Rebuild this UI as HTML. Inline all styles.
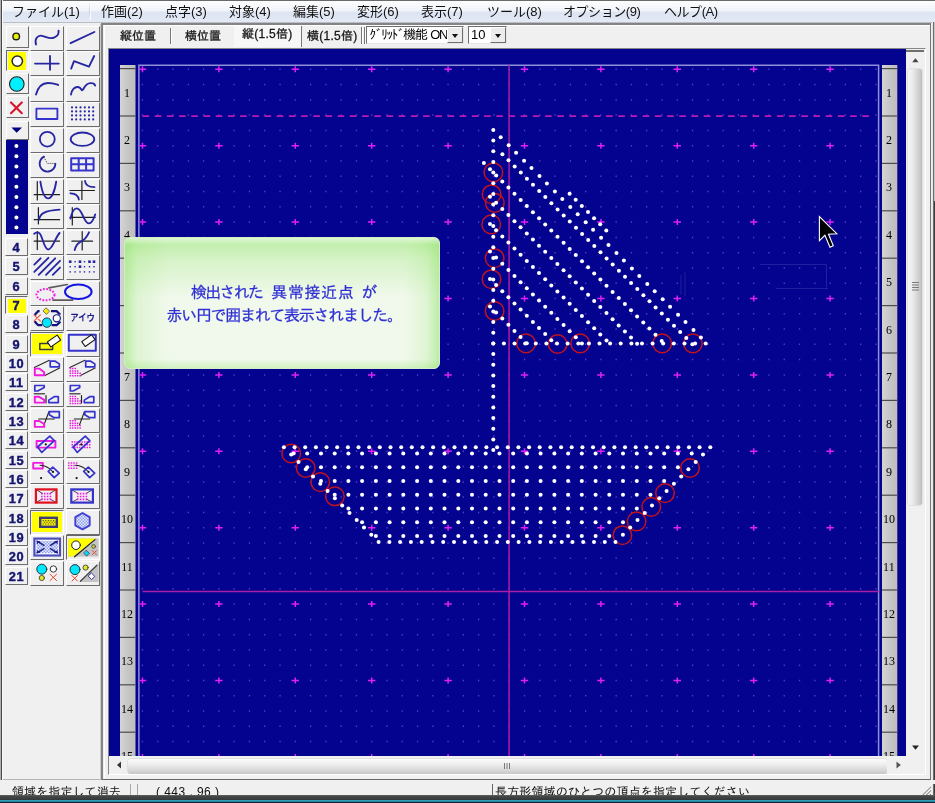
<!DOCTYPE html>
<html lang="ja"><head><meta charset="utf-8"><title>screen</title>
<style>
*{box-sizing:border-box;margin:0;padding:0}
html,body{width:935px;height:803px;overflow:hidden;background:#f0f0f0}
body>*{will-change:transform}
body{position:relative;font-family:"Liberation Sans","Noto Sans CJK JP",sans-serif;font-size:13px;color:#000}
.abs{position:absolute}
#menubar{left:0;top:0;width:935px;height:22.5px;background:linear-gradient(#fdfdfe 0,#f1f4fa 45%,#dde4f2 55%,#e3e9f5 100%);border-top:1.5px solid #6a6a6a;border-bottom:1px solid #b9bdc6}
.mi{position:absolute;top:2px;height:18px;line-height:18px;font-size:13px;white-space:nowrap;color:#111}
#lframe{left:0;top:0;width:3px;height:796px;background:linear-gradient(90deg,#b0b0b0 0,#b0b0b0 38%,#484848 42%,#484848 68%,#fafafa 72%,#fafafa 100%)}
#rframe{left:931.6px;top:22px;width:4px;height:775px;background:linear-gradient(90deg,#f0f0f0 0,#f0f0f0 12%,#6c6c6c 20%,#6c6c6c 50%,#c4c4c4 58%,#d0d0d0 100%)}
.btn{position:absolute;background:#f0f0f0;border-style:solid;border-width:1px 1.5px 1.5px 1px;border-color:#fff #6c6c6c #6c6c6c #fff}
.btn.sel{border-width:1.5px 1px 1px 1.5px;border-color:#666 #fff #fff #666;background:#f0f0f0}
.num{font-family:"Liberation Sans",sans-serif;font-weight:bold;font-size:12.8px;color:#14146e;text-align:center;line-height:17px;letter-spacing:.6px;-webkit-text-stroke:0.4px #14146e}
#panel{left:101.2px;top:22.8px;width:829.6px;height:756.6px;border-style:solid;border-width:2.3px 1.2px 1.5px 2.4px;border-color:#848484 #747474 #686868 #848484;background:#f0f0f0}
#sunk{left:108px;top:48px;width:817.5px;height:726.8px;border-style:solid;border-width:1.5px 1px 1px 1.5px;border-color:#868686 #fff #fff #868686;background:#f0f0f0}
.tab{position:absolute;top:27px;height:18px;line-height:18px;font-family:"Liberation Sans","IPAGothic","Noto Sans CJK JP",sans-serif;font-size:12px;white-space:nowrap;color:#111;-webkit-text-stroke:.3px #222}
.vsep{position:absolute;width:2px;background:linear-gradient(90deg,#777 0,#777 50%,#fff 50%)}
.combo{position:absolute;top:26px;height:18px;background:#fff;border:1px solid;border-color:#6e6e6e #e6e6e6 #e6e6e6 #6e6e6e;font-family:"Liberation Sans","IPAGothic","Noto Sans CJK JP",sans-serif;font-size:13px;line-height:15px;white-space:nowrap;overflow:hidden}
.cbtn{position:absolute;right:0;top:0;width:16px;height:16px;background:#ececec;border:1px solid;border-color:#fff #6e6e6e #6e6e6e #fff}
.cbtn:after{content:"";position:absolute;left:3.5px;top:5.5px;border:3.5px solid transparent;border-top:4px solid #111;border-bottom:0}
#canvas{left:109px;top:49px;width:797px;height:707px;background:#030390;overflow:hidden}
#msg{left:123.5px;top:237px;width:315.5px;height:131.5px;border-radius:6px;border:1px solid #d4edc8;
 background:
  linear-gradient(180deg,rgba(255,255,255,.55) 0,rgba(255,255,255,.25) 4px,rgba(255,255,255,0) 7px),
  linear-gradient(180deg,rgba(140,225,100,.55) 0,rgba(150,228,112,.3) 16%,rgba(160,230,120,0) 46%),
  linear-gradient(90deg,rgba(140,225,100,.5) 0,rgba(150,228,112,.2) 4%,rgba(160,230,120,0) 14%),
  linear-gradient(270deg,rgba(140,225,100,.5) 0,rgba(150,228,112,.2) 4%,rgba(160,230,120,0) 11%),
  linear-gradient(0deg,rgba(150,228,112,.35) 0,rgba(160,230,120,0) 7%),
  #f1f9ec;
 color:#3030d4;text-align:center;font-family:"Liberation Sans","IPAGothic","Noto Sans CJK JP",sans-serif;font-size:15px;white-space:nowrap;-webkit-text-stroke:.25px #3030d4}
#msg .ln{position:absolute;white-space:pre;line-height:18px;font-size:16px}
#status{left:0;top:783px;width:931px;height:12.5px;background:#f0f0f0;overflow:hidden;font-family:"Liberation Sans","IPAGothic","Noto Sans CJK JP",sans-serif;font-size:12px;line-height:14px;color:#111;white-space:nowrap}
#bottom{left:0;top:795.2px;width:935px;height:7.8px;background:linear-gradient(#6a6a6a 0,#484848 12%,#3c3c3c 50%,#2e3a40 60%,#2e9cb4 68%,#2e9cb4 80%,#14283a 88%,#101828 100%)}
</style></head>
<body>
<div id="menubar" class="abs">
<span class="mi" style="left:12px;letter-spacing:0">ファイル(1)</span>
<span class="mi" style="left:101px;letter-spacing:0">作画(2)</span>
<span class="mi" style="left:165px;letter-spacing:0">点字(3)</span>
<span class="mi" style="left:229px;letter-spacing:0">対象(4)</span>
<span class="mi" style="left:293px;letter-spacing:0">編集(5)</span>
<span class="mi" style="left:357px;letter-spacing:0">変形(6)</span>
<span class="mi" style="left:421px;letter-spacing:0">表示(7)</span>
<span class="mi" style="left:487px;letter-spacing:0">ツール(8)</span>
<span class="mi" style="left:563px;letter-spacing:-0.45px">オプション(9)</span>
<span class="mi" style="left:664px;letter-spacing:-0.45px">ヘルプ(A)</span>
<div class="abs" style="left:89px;top:2px;width:1px;height:17px;background:linear-gradient(#eef1f7,#c9d0de,#eef1f7)"></div>
<div class="abs" style="left:90px;top:2px;width:1px;height:17px;background:linear-gradient(#fff,#f7f9fc,#fff)"></div>
</div>
<div id="lframe" class="abs"></div>
<div id="panel" class="abs"></div>
<div class="abs" style="left:103.6px;top:25.1px;width:826px;height:1px;background:#fff"></div>
<div class="abs" style="left:103.6px;top:25.1px;width:1px;height:753px;background:#fff"></div>
<div id="sunk" class="abs"></div>
<div class="abs" style="left:3px;top:779.4px;width:98px;height:1.3px;background:#b4b4b4"></div>
<div class="abs" style="left:99.9px;top:24px;width:1.3px;height:756px;background:#cdcdcd"></div>
<div class="abs" style="left:234px;top:25.5px;width:68px;height:21px;background:#f7f7f7;border-right:1.5px solid #777"></div>
<span class="tab" style="left:120px;top:27px;letter-spacing:0">縦位置</span>
<span class="tab" style="left:185px;top:27px;letter-spacing:0">横位置</span>
<span class="tab" style="left:242px;top:25px;letter-spacing:0.25px">縦(1.5倍)</span>
<span class="tab" style="left:307px;top:27px;letter-spacing:0.25px">横(1.5倍)</span>
<div class="vsep" style="left:169.5px;top:28px;height:16px"></div>
<div class="vsep" style="left:361px;top:27px;height:17px"></div>
<div class="vsep" style="left:363.5px;top:27px;height:17px"></div>
<div class="combo" style="left:366px;width:98px;padding-left:2px"><span id="k1" style="letter-spacing:-1.3px;word-spacing:1.2px;margin-left:.5px">ｸﾞﾘｯﾄﾞ機能 ON</span><div class="cbtn"></div></div>
<div class="combo" style="left:468px;width:39px;padding-left:2px">10<div class="cbtn"></div></div>
<div id="rframe" class="abs"></div>
<div class="abs" style="left:933.6px;top:200.5px;width:1.4px;height:595px;background:#3c3c3c"></div>
<div id="canvas" class="abs"></div>
<svg class="abs" style="left:0;top:0" width="935" height="803" viewBox="0 0 935 803">
<defs><clipPath id="cv"><rect x="109.0" y="49.0" width="797.0" height="707.0"/></clipPath>
<clipPath id="gr"><rect x="138.9" y="65.2" width="739.7" height="690.8"/></clipPath>
<linearGradient id="rul" x1="0" x2="1" y1="0" y2="0"><stop offset="0" stop-color="#d4d4d4"/><stop offset="0.5" stop-color="#c6c6c6"/><stop offset="1" stop-color="#bdbdbd"/></linearGradient>
</defs>
<g clip-path="url(#cv)">
<rect x="120.0" y="65" width="15.5" height="700" fill="url(#rul)"/>
<rect x="120.0" y="68" width="15.5" height="1.2" fill="#4c4c4c"/>
<rect x="120.0" y="115.4" width="15.5" height="1.2" fill="#4c4c4c"/>
<rect x="120.0" y="162.8" width="15.5" height="1.2" fill="#4c4c4c"/>
<rect x="120.0" y="210.2" width="15.5" height="1.2" fill="#4c4c4c"/>
<rect x="120.0" y="257.6" width="15.5" height="1.2" fill="#4c4c4c"/>
<rect x="120.0" y="305" width="15.5" height="1.2" fill="#4c4c4c"/>
<rect x="120.0" y="352.4" width="15.5" height="1.2" fill="#4c4c4c"/>
<rect x="120.0" y="399.8" width="15.5" height="1.2" fill="#4c4c4c"/>
<rect x="120.0" y="447.2" width="15.5" height="1.2" fill="#4c4c4c"/>
<rect x="120.0" y="494.6" width="15.5" height="1.2" fill="#4c4c4c"/>
<rect x="120.0" y="542" width="15.5" height="1.2" fill="#4c4c4c"/>
<rect x="120.0" y="589.4" width="15.5" height="1.2" fill="#4c4c4c"/>
<rect x="120.0" y="636.8" width="15.5" height="1.2" fill="#4c4c4c"/>
<rect x="120.0" y="684.2" width="15.5" height="1.2" fill="#4c4c4c"/>
<rect x="120.0" y="731.6" width="15.5" height="1.2" fill="#4c4c4c"/>
<rect x="120.0" y="779" width="15.5" height="1.2" fill="#4c4c4c"/>
<text x="127" y="96.6" font-family="Liberation Serif,serif" font-size="12" text-anchor="middle" fill="#000">1</text>
<text x="127" y="144" font-family="Liberation Serif,serif" font-size="12" text-anchor="middle" fill="#000">2</text>
<text x="127" y="191.4" font-family="Liberation Serif,serif" font-size="12" text-anchor="middle" fill="#000">3</text>
<text x="127" y="238.8" font-family="Liberation Serif,serif" font-size="12" text-anchor="middle" fill="#000">4</text>
<text x="127" y="286.2" font-family="Liberation Serif,serif" font-size="12" text-anchor="middle" fill="#000">5</text>
<text x="127" y="333.6" font-family="Liberation Serif,serif" font-size="12" text-anchor="middle" fill="#000">6</text>
<text x="127" y="381" font-family="Liberation Serif,serif" font-size="12" text-anchor="middle" fill="#000">7</text>
<text x="127" y="428.4" font-family="Liberation Serif,serif" font-size="12" text-anchor="middle" fill="#000">8</text>
<text x="127" y="475.8" font-family="Liberation Serif,serif" font-size="12" text-anchor="middle" fill="#000">9</text>
<text x="127" y="523.2" font-family="Liberation Serif,serif" font-size="12" text-anchor="middle" fill="#000">10</text>
<text x="127" y="570.6" font-family="Liberation Serif,serif" font-size="12" text-anchor="middle" fill="#000">11</text>
<text x="127" y="618" font-family="Liberation Serif,serif" font-size="12" text-anchor="middle" fill="#000">12</text>
<text x="127" y="665.4" font-family="Liberation Serif,serif" font-size="12" text-anchor="middle" fill="#000">13</text>
<text x="127" y="712.8" font-family="Liberation Serif,serif" font-size="12" text-anchor="middle" fill="#000">14</text>
<text x="127" y="760.2" font-family="Liberation Serif,serif" font-size="12" text-anchor="middle" fill="#000">15</text>
<rect x="882.0" y="65" width="15.3" height="700" fill="url(#rul)"/>
<rect x="882.0" y="68" width="15.3" height="1.2" fill="#4c4c4c"/>
<rect x="882.0" y="115.4" width="15.3" height="1.2" fill="#4c4c4c"/>
<rect x="882.0" y="162.8" width="15.3" height="1.2" fill="#4c4c4c"/>
<rect x="882.0" y="210.2" width="15.3" height="1.2" fill="#4c4c4c"/>
<rect x="882.0" y="257.6" width="15.3" height="1.2" fill="#4c4c4c"/>
<rect x="882.0" y="305" width="15.3" height="1.2" fill="#4c4c4c"/>
<rect x="882.0" y="352.4" width="15.3" height="1.2" fill="#4c4c4c"/>
<rect x="882.0" y="399.8" width="15.3" height="1.2" fill="#4c4c4c"/>
<rect x="882.0" y="447.2" width="15.3" height="1.2" fill="#4c4c4c"/>
<rect x="882.0" y="494.6" width="15.3" height="1.2" fill="#4c4c4c"/>
<rect x="882.0" y="542" width="15.3" height="1.2" fill="#4c4c4c"/>
<rect x="882.0" y="589.4" width="15.3" height="1.2" fill="#4c4c4c"/>
<rect x="882.0" y="636.8" width="15.3" height="1.2" fill="#4c4c4c"/>
<rect x="882.0" y="684.2" width="15.3" height="1.2" fill="#4c4c4c"/>
<rect x="882.0" y="731.6" width="15.3" height="1.2" fill="#4c4c4c"/>
<rect x="882.0" y="779" width="15.3" height="1.2" fill="#4c4c4c"/>
<text x="888.9" y="96.6" font-family="Liberation Serif,serif" font-size="12" text-anchor="middle" fill="#000">1</text>
<text x="888.9" y="144" font-family="Liberation Serif,serif" font-size="12" text-anchor="middle" fill="#000">2</text>
<text x="888.9" y="191.4" font-family="Liberation Serif,serif" font-size="12" text-anchor="middle" fill="#000">3</text>
<text x="888.9" y="238.8" font-family="Liberation Serif,serif" font-size="12" text-anchor="middle" fill="#000">4</text>
<text x="888.9" y="286.2" font-family="Liberation Serif,serif" font-size="12" text-anchor="middle" fill="#000">5</text>
<text x="888.9" y="333.6" font-family="Liberation Serif,serif" font-size="12" text-anchor="middle" fill="#000">6</text>
<text x="888.9" y="381" font-family="Liberation Serif,serif" font-size="12" text-anchor="middle" fill="#000">7</text>
<text x="888.9" y="428.4" font-family="Liberation Serif,serif" font-size="12" text-anchor="middle" fill="#000">8</text>
<text x="888.9" y="475.8" font-family="Liberation Serif,serif" font-size="12" text-anchor="middle" fill="#000">9</text>
<text x="888.9" y="523.2" font-family="Liberation Serif,serif" font-size="12" text-anchor="middle" fill="#000">10</text>
<text x="888.9" y="570.6" font-family="Liberation Serif,serif" font-size="12" text-anchor="middle" fill="#000">11</text>
<text x="888.9" y="618" font-family="Liberation Serif,serif" font-size="12" text-anchor="middle" fill="#000">12</text>
<text x="888.9" y="665.4" font-family="Liberation Serif,serif" font-size="12" text-anchor="middle" fill="#000">13</text>
<text x="888.9" y="712.8" font-family="Liberation Serif,serif" font-size="12" text-anchor="middle" fill="#000">14</text>
<text x="888.9" y="760.2" font-family="Liberation Serif,serif" font-size="12" text-anchor="middle" fill="#000">15</text>
<path d="M138.9 760V65.2H878.6V760" fill="none" stroke="#9090da" stroke-width="1.5"/>
<g clip-path="url(#gr)">
<path d="M157.1 69.3h1.3M172.4 69.3h1.3M187.7 69.3h1.3M203 69.3h1.3M233.5 69.3h1.3M248.8 69.3h1.3M264.1 69.3h1.3M279.4 69.3h1.3M309.9 69.3h1.3M325.2 69.3h1.3M340.5 69.3h1.3M355.8 69.3h1.3M386.3 69.3h1.3M401.6 69.3h1.3M416.9 69.3h1.3M432.2 69.3h1.3M462.7 69.3h1.3M478 69.3h1.3M493.3 69.3h1.3M508.6 69.3h1.3M539.1 69.3h1.3M554.4 69.3h1.3M569.7 69.3h1.3M585 69.3h1.3M615.5 69.3h1.3M630.8 69.3h1.3M646.1 69.3h1.3M661.4 69.3h1.3M691.9 69.3h1.3M707.2 69.3h1.3M722.5 69.3h1.3M737.8 69.3h1.3M768.3 69.3h1.3M783.6 69.3h1.3M798.9 69.3h1.3M814.2 69.3h1.3M844.7 69.3h1.3M860 69.3h1.3M875.3 69.3h1.3M141.8 84.6h1.3M157.1 84.6h1.3M172.4 84.6h1.3M187.7 84.6h1.3M203 84.6h1.3M218.2 84.6h1.3M233.5 84.6h1.3M248.8 84.6h1.3M264.1 84.6h1.3M279.4 84.6h1.3M294.6 84.6h1.3M309.9 84.6h1.3M325.2 84.6h1.3M340.5 84.6h1.3M355.8 84.6h1.3M371.1 84.6h1.3M386.3 84.6h1.3M401.6 84.6h1.3M416.9 84.6h1.3M432.2 84.6h1.3M447.4 84.6h1.3M462.7 84.6h1.3M478 84.6h1.3M493.3 84.6h1.3M508.6 84.6h1.3M523.9 84.6h1.3M539.1 84.6h1.3M554.4 84.6h1.3M569.7 84.6h1.3M585 84.6h1.3M600.2 84.6h1.3M615.5 84.6h1.3M630.8 84.6h1.3M646.1 84.6h1.3M661.4 84.6h1.3M676.6 84.6h1.3M691.9 84.6h1.3M707.2 84.6h1.3M722.5 84.6h1.3M737.8 84.6h1.3M753 84.6h1.3M768.3 84.6h1.3M783.6 84.6h1.3M798.9 84.6h1.3M814.2 84.6h1.3M829.5 84.6h1.3M844.7 84.6h1.3M860 84.6h1.3M875.3 84.6h1.3M141.8 99.9h1.3M157.1 99.9h1.3M172.4 99.9h1.3M187.7 99.9h1.3M203 99.9h1.3M218.2 99.9h1.3M233.5 99.9h1.3M248.8 99.9h1.3M264.1 99.9h1.3M279.4 99.9h1.3M294.6 99.9h1.3M309.9 99.9h1.3M325.2 99.9h1.3M340.5 99.9h1.3M355.8 99.9h1.3M371.1 99.9h1.3M386.3 99.9h1.3M401.6 99.9h1.3M416.9 99.9h1.3M432.2 99.9h1.3M447.4 99.9h1.3M462.7 99.9h1.3M478 99.9h1.3M493.3 99.9h1.3M508.6 99.9h1.3M523.9 99.9h1.3M539.1 99.9h1.3M554.4 99.9h1.3M569.7 99.9h1.3M585 99.9h1.3M600.2 99.9h1.3M615.5 99.9h1.3M630.8 99.9h1.3M646.1 99.9h1.3M661.4 99.9h1.3M676.6 99.9h1.3M691.9 99.9h1.3M707.2 99.9h1.3M722.5 99.9h1.3M737.8 99.9h1.3M753 99.9h1.3M768.3 99.9h1.3M783.6 99.9h1.3M798.9 99.9h1.3M814.2 99.9h1.3M829.5 99.9h1.3M844.7 99.9h1.3M860 99.9h1.3M875.3 99.9h1.3M141.8 115.1h1.3M157.1 115.1h1.3M172.4 115.1h1.3M187.7 115.1h1.3M203 115.1h1.3M218.2 115.1h1.3M233.5 115.1h1.3M248.8 115.1h1.3M264.1 115.1h1.3M279.4 115.1h1.3M294.6 115.1h1.3M309.9 115.1h1.3M325.2 115.1h1.3M340.5 115.1h1.3M355.8 115.1h1.3M371.1 115.1h1.3M386.3 115.1h1.3M401.6 115.1h1.3M416.9 115.1h1.3M432.2 115.1h1.3M447.4 115.1h1.3M462.7 115.1h1.3M478 115.1h1.3M493.3 115.1h1.3M508.6 115.1h1.3M523.9 115.1h1.3M539.1 115.1h1.3M554.4 115.1h1.3M569.7 115.1h1.3M585 115.1h1.3M600.2 115.1h1.3M615.5 115.1h1.3M630.8 115.1h1.3M646.1 115.1h1.3M661.4 115.1h1.3M676.6 115.1h1.3M691.9 115.1h1.3M707.2 115.1h1.3M722.5 115.1h1.3M737.8 115.1h1.3M753 115.1h1.3M768.3 115.1h1.3M783.6 115.1h1.3M798.9 115.1h1.3M814.2 115.1h1.3M829.5 115.1h1.3M844.7 115.1h1.3M860 115.1h1.3M875.3 115.1h1.3M141.8 130.4h1.3M157.1 130.4h1.3M172.4 130.4h1.3M187.7 130.4h1.3M203 130.4h1.3M218.2 130.4h1.3M233.5 130.4h1.3M248.8 130.4h1.3M264.1 130.4h1.3M279.4 130.4h1.3M294.6 130.4h1.3M309.9 130.4h1.3M325.2 130.4h1.3M340.5 130.4h1.3M355.8 130.4h1.3M371.1 130.4h1.3M386.3 130.4h1.3M401.6 130.4h1.3M416.9 130.4h1.3M432.2 130.4h1.3M447.4 130.4h1.3M462.7 130.4h1.3M478 130.4h1.3M493.3 130.4h1.3M508.6 130.4h1.3M523.9 130.4h1.3M539.1 130.4h1.3M554.4 130.4h1.3M569.7 130.4h1.3M585 130.4h1.3M600.2 130.4h1.3M615.5 130.4h1.3M630.8 130.4h1.3M646.1 130.4h1.3M661.4 130.4h1.3M676.6 130.4h1.3M691.9 130.4h1.3M707.2 130.4h1.3M722.5 130.4h1.3M737.8 130.4h1.3M753 130.4h1.3M768.3 130.4h1.3M783.6 130.4h1.3M798.9 130.4h1.3M814.2 130.4h1.3M829.5 130.4h1.3M844.7 130.4h1.3M860 130.4h1.3M875.3 130.4h1.3M157.1 145.7h1.3M172.4 145.7h1.3M187.7 145.7h1.3M203 145.7h1.3M233.5 145.7h1.3M248.8 145.7h1.3M264.1 145.7h1.3M279.4 145.7h1.3M309.9 145.7h1.3M325.2 145.7h1.3M340.5 145.7h1.3M355.8 145.7h1.3M386.3 145.7h1.3M401.6 145.7h1.3M416.9 145.7h1.3M432.2 145.7h1.3M462.7 145.7h1.3M478 145.7h1.3M493.3 145.7h1.3M508.6 145.7h1.3M539.1 145.7h1.3M554.4 145.7h1.3M569.7 145.7h1.3M585 145.7h1.3M615.5 145.7h1.3M630.8 145.7h1.3M646.1 145.7h1.3M661.4 145.7h1.3M691.9 145.7h1.3M707.2 145.7h1.3M722.5 145.7h1.3M737.8 145.7h1.3M768.3 145.7h1.3M783.6 145.7h1.3M798.9 145.7h1.3M814.2 145.7h1.3M844.7 145.7h1.3M860 145.7h1.3M875.3 145.7h1.3M141.8 161h1.3M157.1 161h1.3M172.4 161h1.3M187.7 161h1.3M203 161h1.3M218.2 161h1.3M233.5 161h1.3M248.8 161h1.3M264.1 161h1.3M279.4 161h1.3M294.6 161h1.3M309.9 161h1.3M325.2 161h1.3M340.5 161h1.3M355.8 161h1.3M371.1 161h1.3M386.3 161h1.3M401.6 161h1.3M416.9 161h1.3M432.2 161h1.3M447.4 161h1.3M462.7 161h1.3M478 161h1.3M493.3 161h1.3M508.6 161h1.3M523.9 161h1.3M539.1 161h1.3M554.4 161h1.3M569.7 161h1.3M585 161h1.3M600.2 161h1.3M615.5 161h1.3M630.8 161h1.3M646.1 161h1.3M661.4 161h1.3M676.6 161h1.3M691.9 161h1.3M707.2 161h1.3M722.5 161h1.3M737.8 161h1.3M753 161h1.3M768.3 161h1.3M783.6 161h1.3M798.9 161h1.3M814.2 161h1.3M829.5 161h1.3M844.7 161h1.3M860 161h1.3M875.3 161h1.3M141.8 176.3h1.3M157.1 176.3h1.3M172.4 176.3h1.3M187.7 176.3h1.3M203 176.3h1.3M218.2 176.3h1.3M233.5 176.3h1.3M248.8 176.3h1.3M264.1 176.3h1.3M279.4 176.3h1.3M294.6 176.3h1.3M309.9 176.3h1.3M325.2 176.3h1.3M340.5 176.3h1.3M355.8 176.3h1.3M371.1 176.3h1.3M386.3 176.3h1.3M401.6 176.3h1.3M416.9 176.3h1.3M432.2 176.3h1.3M447.4 176.3h1.3M462.7 176.3h1.3M478 176.3h1.3M493.3 176.3h1.3M508.6 176.3h1.3M523.9 176.3h1.3M539.1 176.3h1.3M554.4 176.3h1.3M569.7 176.3h1.3M585 176.3h1.3M600.2 176.3h1.3M615.5 176.3h1.3M630.8 176.3h1.3M646.1 176.3h1.3M661.4 176.3h1.3M676.6 176.3h1.3M691.9 176.3h1.3M707.2 176.3h1.3M722.5 176.3h1.3M737.8 176.3h1.3M753 176.3h1.3M768.3 176.3h1.3M783.6 176.3h1.3M798.9 176.3h1.3M814.2 176.3h1.3M829.5 176.3h1.3M844.7 176.3h1.3M860 176.3h1.3M875.3 176.3h1.3M141.8 191.5h1.3M157.1 191.5h1.3M172.4 191.5h1.3M187.7 191.5h1.3M203 191.5h1.3M218.2 191.5h1.3M233.5 191.5h1.3M248.8 191.5h1.3M264.1 191.5h1.3M279.4 191.5h1.3M294.6 191.5h1.3M309.9 191.5h1.3M325.2 191.5h1.3M340.5 191.5h1.3M355.8 191.5h1.3M371.1 191.5h1.3M386.3 191.5h1.3M401.6 191.5h1.3M416.9 191.5h1.3M432.2 191.5h1.3M447.4 191.5h1.3M462.7 191.5h1.3M478 191.5h1.3M493.3 191.5h1.3M508.6 191.5h1.3M523.9 191.5h1.3M539.1 191.5h1.3M554.4 191.5h1.3M569.7 191.5h1.3M585 191.5h1.3M600.2 191.5h1.3M615.5 191.5h1.3M630.8 191.5h1.3M646.1 191.5h1.3M661.4 191.5h1.3M676.6 191.5h1.3M691.9 191.5h1.3M707.2 191.5h1.3M722.5 191.5h1.3M737.8 191.5h1.3M753 191.5h1.3M768.3 191.5h1.3M783.6 191.5h1.3M798.9 191.5h1.3M814.2 191.5h1.3M829.5 191.5h1.3M844.7 191.5h1.3M860 191.5h1.3M875.3 191.5h1.3M141.8 206.8h1.3M157.1 206.8h1.3M172.4 206.8h1.3M187.7 206.8h1.3M203 206.8h1.3M218.2 206.8h1.3M233.5 206.8h1.3M248.8 206.8h1.3M264.1 206.8h1.3M279.4 206.8h1.3M294.6 206.8h1.3M309.9 206.8h1.3M325.2 206.8h1.3M340.5 206.8h1.3M355.8 206.8h1.3M371.1 206.8h1.3M386.3 206.8h1.3M401.6 206.8h1.3M416.9 206.8h1.3M432.2 206.8h1.3M447.4 206.8h1.3M462.7 206.8h1.3M478 206.8h1.3M493.3 206.8h1.3M508.6 206.8h1.3M523.9 206.8h1.3M539.1 206.8h1.3M554.4 206.8h1.3M569.7 206.8h1.3M585 206.8h1.3M600.2 206.8h1.3M615.5 206.8h1.3M630.8 206.8h1.3M646.1 206.8h1.3M661.4 206.8h1.3M676.6 206.8h1.3M691.9 206.8h1.3M707.2 206.8h1.3M722.5 206.8h1.3M737.8 206.8h1.3M753 206.8h1.3M768.3 206.8h1.3M783.6 206.8h1.3M798.9 206.8h1.3M814.2 206.8h1.3M829.5 206.8h1.3M844.7 206.8h1.3M860 206.8h1.3M875.3 206.8h1.3M157.1 222.1h1.3M172.4 222.1h1.3M187.7 222.1h1.3M203 222.1h1.3M233.5 222.1h1.3M248.8 222.1h1.3M264.1 222.1h1.3M279.4 222.1h1.3M309.9 222.1h1.3M325.2 222.1h1.3M340.5 222.1h1.3M355.8 222.1h1.3M386.3 222.1h1.3M401.6 222.1h1.3M416.9 222.1h1.3M432.2 222.1h1.3M462.7 222.1h1.3M478 222.1h1.3M493.3 222.1h1.3M508.6 222.1h1.3M539.1 222.1h1.3M554.4 222.1h1.3M569.7 222.1h1.3M585 222.1h1.3M615.5 222.1h1.3M630.8 222.1h1.3M646.1 222.1h1.3M661.4 222.1h1.3M691.9 222.1h1.3M707.2 222.1h1.3M722.5 222.1h1.3M737.8 222.1h1.3M768.3 222.1h1.3M783.6 222.1h1.3M798.9 222.1h1.3M814.2 222.1h1.3M844.7 222.1h1.3M860 222.1h1.3M875.3 222.1h1.3M141.8 237.4h1.3M157.1 237.4h1.3M172.4 237.4h1.3M187.7 237.4h1.3M203 237.4h1.3M218.2 237.4h1.3M233.5 237.4h1.3M248.8 237.4h1.3M264.1 237.4h1.3M279.4 237.4h1.3M294.6 237.4h1.3M309.9 237.4h1.3M325.2 237.4h1.3M340.5 237.4h1.3M355.8 237.4h1.3M371.1 237.4h1.3M386.3 237.4h1.3M401.6 237.4h1.3M416.9 237.4h1.3M432.2 237.4h1.3M447.4 237.4h1.3M462.7 237.4h1.3M478 237.4h1.3M493.3 237.4h1.3M508.6 237.4h1.3M523.9 237.4h1.3M539.1 237.4h1.3M554.4 237.4h1.3M569.7 237.4h1.3M585 237.4h1.3M600.2 237.4h1.3M615.5 237.4h1.3M630.8 237.4h1.3M646.1 237.4h1.3M661.4 237.4h1.3M676.6 237.4h1.3M691.9 237.4h1.3M707.2 237.4h1.3M722.5 237.4h1.3M737.8 237.4h1.3M753 237.4h1.3M768.3 237.4h1.3M783.6 237.4h1.3M798.9 237.4h1.3M814.2 237.4h1.3M829.5 237.4h1.3M844.7 237.4h1.3M860 237.4h1.3M875.3 237.4h1.3M141.8 252.7h1.3M157.1 252.7h1.3M172.4 252.7h1.3M187.7 252.7h1.3M203 252.7h1.3M218.2 252.7h1.3M233.5 252.7h1.3M248.8 252.7h1.3M264.1 252.7h1.3M279.4 252.7h1.3M294.6 252.7h1.3M309.9 252.7h1.3M325.2 252.7h1.3M340.5 252.7h1.3M355.8 252.7h1.3M371.1 252.7h1.3M386.3 252.7h1.3M401.6 252.7h1.3M416.9 252.7h1.3M432.2 252.7h1.3M447.4 252.7h1.3M462.7 252.7h1.3M478 252.7h1.3M493.3 252.7h1.3M508.6 252.7h1.3M523.9 252.7h1.3M539.1 252.7h1.3M554.4 252.7h1.3M569.7 252.7h1.3M585 252.7h1.3M600.2 252.7h1.3M615.5 252.7h1.3M630.8 252.7h1.3M646.1 252.7h1.3M661.4 252.7h1.3M676.6 252.7h1.3M691.9 252.7h1.3M707.2 252.7h1.3M722.5 252.7h1.3M737.8 252.7h1.3M753 252.7h1.3M768.3 252.7h1.3M783.6 252.7h1.3M798.9 252.7h1.3M814.2 252.7h1.3M829.5 252.7h1.3M844.7 252.7h1.3M860 252.7h1.3M875.3 252.7h1.3M141.8 267.9h1.3M157.1 267.9h1.3M172.4 267.9h1.3M187.7 267.9h1.3M203 267.9h1.3M218.2 267.9h1.3M233.5 267.9h1.3M248.8 267.9h1.3M264.1 267.9h1.3M279.4 267.9h1.3M294.6 267.9h1.3M309.9 267.9h1.3M325.2 267.9h1.3M340.5 267.9h1.3M355.8 267.9h1.3M371.1 267.9h1.3M386.3 267.9h1.3M401.6 267.9h1.3M416.9 267.9h1.3M432.2 267.9h1.3M447.4 267.9h1.3M462.7 267.9h1.3M478 267.9h1.3M493.3 267.9h1.3M508.6 267.9h1.3M523.9 267.9h1.3M539.1 267.9h1.3M554.4 267.9h1.3M569.7 267.9h1.3M585 267.9h1.3M600.2 267.9h1.3M615.5 267.9h1.3M630.8 267.9h1.3M646.1 267.9h1.3M661.4 267.9h1.3M676.6 267.9h1.3M691.9 267.9h1.3M707.2 267.9h1.3M722.5 267.9h1.3M737.8 267.9h1.3M753 267.9h1.3M768.3 267.9h1.3M783.6 267.9h1.3M798.9 267.9h1.3M814.2 267.9h1.3M829.5 267.9h1.3M844.7 267.9h1.3M860 267.9h1.3M875.3 267.9h1.3M141.8 283.2h1.3M157.1 283.2h1.3M172.4 283.2h1.3M187.7 283.2h1.3M203 283.2h1.3M218.2 283.2h1.3M233.5 283.2h1.3M248.8 283.2h1.3M264.1 283.2h1.3M279.4 283.2h1.3M294.6 283.2h1.3M309.9 283.2h1.3M325.2 283.2h1.3M340.5 283.2h1.3M355.8 283.2h1.3M371.1 283.2h1.3M386.3 283.2h1.3M401.6 283.2h1.3M416.9 283.2h1.3M432.2 283.2h1.3M447.4 283.2h1.3M462.7 283.2h1.3M478 283.2h1.3M493.3 283.2h1.3M508.6 283.2h1.3M523.9 283.2h1.3M539.1 283.2h1.3M554.4 283.2h1.3M569.7 283.2h1.3M585 283.2h1.3M600.2 283.2h1.3M615.5 283.2h1.3M630.8 283.2h1.3M646.1 283.2h1.3M661.4 283.2h1.3M676.6 283.2h1.3M691.9 283.2h1.3M707.2 283.2h1.3M722.5 283.2h1.3M737.8 283.2h1.3M753 283.2h1.3M768.3 283.2h1.3M783.6 283.2h1.3M798.9 283.2h1.3M814.2 283.2h1.3M829.5 283.2h1.3M844.7 283.2h1.3M860 283.2h1.3M875.3 283.2h1.3M157.1 298.5h1.3M172.4 298.5h1.3M187.7 298.5h1.3M203 298.5h1.3M233.5 298.5h1.3M248.8 298.5h1.3M264.1 298.5h1.3M279.4 298.5h1.3M309.9 298.5h1.3M325.2 298.5h1.3M340.5 298.5h1.3M355.8 298.5h1.3M386.3 298.5h1.3M401.6 298.5h1.3M416.9 298.5h1.3M432.2 298.5h1.3M462.7 298.5h1.3M478 298.5h1.3M493.3 298.5h1.3M508.6 298.5h1.3M539.1 298.5h1.3M554.4 298.5h1.3M569.7 298.5h1.3M585 298.5h1.3M615.5 298.5h1.3M630.8 298.5h1.3M646.1 298.5h1.3M661.4 298.5h1.3M691.9 298.5h1.3M707.2 298.5h1.3M722.5 298.5h1.3M737.8 298.5h1.3M768.3 298.5h1.3M783.6 298.5h1.3M798.9 298.5h1.3M814.2 298.5h1.3M844.7 298.5h1.3M860 298.5h1.3M875.3 298.5h1.3M141.8 313.8h1.3M157.1 313.8h1.3M172.4 313.8h1.3M187.7 313.8h1.3M203 313.8h1.3M218.2 313.8h1.3M233.5 313.8h1.3M248.8 313.8h1.3M264.1 313.8h1.3M279.4 313.8h1.3M294.6 313.8h1.3M309.9 313.8h1.3M325.2 313.8h1.3M340.5 313.8h1.3M355.8 313.8h1.3M371.1 313.8h1.3M386.3 313.8h1.3M401.6 313.8h1.3M416.9 313.8h1.3M432.2 313.8h1.3M447.4 313.8h1.3M462.7 313.8h1.3M478 313.8h1.3M493.3 313.8h1.3M508.6 313.8h1.3M523.9 313.8h1.3M539.1 313.8h1.3M554.4 313.8h1.3M569.7 313.8h1.3M585 313.8h1.3M600.2 313.8h1.3M615.5 313.8h1.3M630.8 313.8h1.3M646.1 313.8h1.3M661.4 313.8h1.3M676.6 313.8h1.3M691.9 313.8h1.3M707.2 313.8h1.3M722.5 313.8h1.3M737.8 313.8h1.3M753 313.8h1.3M768.3 313.8h1.3M783.6 313.8h1.3M798.9 313.8h1.3M814.2 313.8h1.3M829.5 313.8h1.3M844.7 313.8h1.3M860 313.8h1.3M875.3 313.8h1.3M141.8 329.1h1.3M157.1 329.1h1.3M172.4 329.1h1.3M187.7 329.1h1.3M203 329.1h1.3M218.2 329.1h1.3M233.5 329.1h1.3M248.8 329.1h1.3M264.1 329.1h1.3M279.4 329.1h1.3M294.6 329.1h1.3M309.9 329.1h1.3M325.2 329.1h1.3M340.5 329.1h1.3M355.8 329.1h1.3M371.1 329.1h1.3M386.3 329.1h1.3M401.6 329.1h1.3M416.9 329.1h1.3M432.2 329.1h1.3M447.4 329.1h1.3M462.7 329.1h1.3M478 329.1h1.3M493.3 329.1h1.3M508.6 329.1h1.3M523.9 329.1h1.3M539.1 329.1h1.3M554.4 329.1h1.3M569.7 329.1h1.3M585 329.1h1.3M600.2 329.1h1.3M615.5 329.1h1.3M630.8 329.1h1.3M646.1 329.1h1.3M661.4 329.1h1.3M676.6 329.1h1.3M691.9 329.1h1.3M707.2 329.1h1.3M722.5 329.1h1.3M737.8 329.1h1.3M753 329.1h1.3M768.3 329.1h1.3M783.6 329.1h1.3M798.9 329.1h1.3M814.2 329.1h1.3M829.5 329.1h1.3M844.7 329.1h1.3M860 329.1h1.3M875.3 329.1h1.3M141.8 344.3h1.3M157.1 344.3h1.3M172.4 344.3h1.3M187.7 344.3h1.3M203 344.3h1.3M218.2 344.3h1.3M233.5 344.3h1.3M248.8 344.3h1.3M264.1 344.3h1.3M279.4 344.3h1.3M294.6 344.3h1.3M309.9 344.3h1.3M325.2 344.3h1.3M340.5 344.3h1.3M355.8 344.3h1.3M371.1 344.3h1.3M386.3 344.3h1.3M401.6 344.3h1.3M416.9 344.3h1.3M432.2 344.3h1.3M447.4 344.3h1.3M462.7 344.3h1.3M478 344.3h1.3M493.3 344.3h1.3M508.6 344.3h1.3M523.9 344.3h1.3M539.1 344.3h1.3M554.4 344.3h1.3M569.7 344.3h1.3M585 344.3h1.3M600.2 344.3h1.3M615.5 344.3h1.3M630.8 344.3h1.3M646.1 344.3h1.3M661.4 344.3h1.3M676.6 344.3h1.3M691.9 344.3h1.3M707.2 344.3h1.3M722.5 344.3h1.3M737.8 344.3h1.3M753 344.3h1.3M768.3 344.3h1.3M783.6 344.3h1.3M798.9 344.3h1.3M814.2 344.3h1.3M829.5 344.3h1.3M844.7 344.3h1.3M860 344.3h1.3M875.3 344.3h1.3M141.8 359.6h1.3M157.1 359.6h1.3M172.4 359.6h1.3M187.7 359.6h1.3M203 359.6h1.3M218.2 359.6h1.3M233.5 359.6h1.3M248.8 359.6h1.3M264.1 359.6h1.3M279.4 359.6h1.3M294.6 359.6h1.3M309.9 359.6h1.3M325.2 359.6h1.3M340.5 359.6h1.3M355.8 359.6h1.3M371.1 359.6h1.3M386.3 359.6h1.3M401.6 359.6h1.3M416.9 359.6h1.3M432.2 359.6h1.3M447.4 359.6h1.3M462.7 359.6h1.3M478 359.6h1.3M493.3 359.6h1.3M508.6 359.6h1.3M523.9 359.6h1.3M539.1 359.6h1.3M554.4 359.6h1.3M569.7 359.6h1.3M585 359.6h1.3M600.2 359.6h1.3M615.5 359.6h1.3M630.8 359.6h1.3M646.1 359.6h1.3M661.4 359.6h1.3M676.6 359.6h1.3M691.9 359.6h1.3M707.2 359.6h1.3M722.5 359.6h1.3M737.8 359.6h1.3M753 359.6h1.3M768.3 359.6h1.3M783.6 359.6h1.3M798.9 359.6h1.3M814.2 359.6h1.3M829.5 359.6h1.3M844.7 359.6h1.3M860 359.6h1.3M875.3 359.6h1.3M157.1 374.9h1.3M172.4 374.9h1.3M187.7 374.9h1.3M203 374.9h1.3M233.5 374.9h1.3M248.8 374.9h1.3M264.1 374.9h1.3M279.4 374.9h1.3M309.9 374.9h1.3M325.2 374.9h1.3M340.5 374.9h1.3M355.8 374.9h1.3M386.3 374.9h1.3M401.6 374.9h1.3M416.9 374.9h1.3M432.2 374.9h1.3M462.7 374.9h1.3M478 374.9h1.3M493.3 374.9h1.3M508.6 374.9h1.3M539.1 374.9h1.3M554.4 374.9h1.3M569.7 374.9h1.3M585 374.9h1.3M615.5 374.9h1.3M630.8 374.9h1.3M646.1 374.9h1.3M661.4 374.9h1.3M691.9 374.9h1.3M707.2 374.9h1.3M722.5 374.9h1.3M737.8 374.9h1.3M768.3 374.9h1.3M783.6 374.9h1.3M798.9 374.9h1.3M814.2 374.9h1.3M844.7 374.9h1.3M860 374.9h1.3M875.3 374.9h1.3M141.8 390.2h1.3M157.1 390.2h1.3M172.4 390.2h1.3M187.7 390.2h1.3M203 390.2h1.3M218.2 390.2h1.3M233.5 390.2h1.3M248.8 390.2h1.3M264.1 390.2h1.3M279.4 390.2h1.3M294.6 390.2h1.3M309.9 390.2h1.3M325.2 390.2h1.3M340.5 390.2h1.3M355.8 390.2h1.3M371.1 390.2h1.3M386.3 390.2h1.3M401.6 390.2h1.3M416.9 390.2h1.3M432.2 390.2h1.3M447.4 390.2h1.3M462.7 390.2h1.3M478 390.2h1.3M493.3 390.2h1.3M508.6 390.2h1.3M523.9 390.2h1.3M539.1 390.2h1.3M554.4 390.2h1.3M569.7 390.2h1.3M585 390.2h1.3M600.2 390.2h1.3M615.5 390.2h1.3M630.8 390.2h1.3M646.1 390.2h1.3M661.4 390.2h1.3M676.6 390.2h1.3M691.9 390.2h1.3M707.2 390.2h1.3M722.5 390.2h1.3M737.8 390.2h1.3M753 390.2h1.3M768.3 390.2h1.3M783.6 390.2h1.3M798.9 390.2h1.3M814.2 390.2h1.3M829.5 390.2h1.3M844.7 390.2h1.3M860 390.2h1.3M875.3 390.2h1.3M141.8 405.5h1.3M157.1 405.5h1.3M172.4 405.5h1.3M187.7 405.5h1.3M203 405.5h1.3M218.2 405.5h1.3M233.5 405.5h1.3M248.8 405.5h1.3M264.1 405.5h1.3M279.4 405.5h1.3M294.6 405.5h1.3M309.9 405.5h1.3M325.2 405.5h1.3M340.5 405.5h1.3M355.8 405.5h1.3M371.1 405.5h1.3M386.3 405.5h1.3M401.6 405.5h1.3M416.9 405.5h1.3M432.2 405.5h1.3M447.4 405.5h1.3M462.7 405.5h1.3M478 405.5h1.3M493.3 405.5h1.3M508.6 405.5h1.3M523.9 405.5h1.3M539.1 405.5h1.3M554.4 405.5h1.3M569.7 405.5h1.3M585 405.5h1.3M600.2 405.5h1.3M615.5 405.5h1.3M630.8 405.5h1.3M646.1 405.5h1.3M661.4 405.5h1.3M676.6 405.5h1.3M691.9 405.5h1.3M707.2 405.5h1.3M722.5 405.5h1.3M737.8 405.5h1.3M753 405.5h1.3M768.3 405.5h1.3M783.6 405.5h1.3M798.9 405.5h1.3M814.2 405.5h1.3M829.5 405.5h1.3M844.7 405.5h1.3M860 405.5h1.3M875.3 405.5h1.3M141.8 420.7h1.3M157.1 420.7h1.3M172.4 420.7h1.3M187.7 420.7h1.3M203 420.7h1.3M218.2 420.7h1.3M233.5 420.7h1.3M248.8 420.7h1.3M264.1 420.7h1.3M279.4 420.7h1.3M294.6 420.7h1.3M309.9 420.7h1.3M325.2 420.7h1.3M340.5 420.7h1.3M355.8 420.7h1.3M371.1 420.7h1.3M386.3 420.7h1.3M401.6 420.7h1.3M416.9 420.7h1.3M432.2 420.7h1.3M447.4 420.7h1.3M462.7 420.7h1.3M478 420.7h1.3M493.3 420.7h1.3M508.6 420.7h1.3M523.9 420.7h1.3M539.1 420.7h1.3M554.4 420.7h1.3M569.7 420.7h1.3M585 420.7h1.3M600.2 420.7h1.3M615.5 420.7h1.3M630.8 420.7h1.3M646.1 420.7h1.3M661.4 420.7h1.3M676.6 420.7h1.3M691.9 420.7h1.3M707.2 420.7h1.3M722.5 420.7h1.3M737.8 420.7h1.3M753 420.7h1.3M768.3 420.7h1.3M783.6 420.7h1.3M798.9 420.7h1.3M814.2 420.7h1.3M829.5 420.7h1.3M844.7 420.7h1.3M860 420.7h1.3M875.3 420.7h1.3M141.8 436h1.3M157.1 436h1.3M172.4 436h1.3M187.7 436h1.3M203 436h1.3M218.2 436h1.3M233.5 436h1.3M248.8 436h1.3M264.1 436h1.3M279.4 436h1.3M294.6 436h1.3M309.9 436h1.3M325.2 436h1.3M340.5 436h1.3M355.8 436h1.3M371.1 436h1.3M386.3 436h1.3M401.6 436h1.3M416.9 436h1.3M432.2 436h1.3M447.4 436h1.3M462.7 436h1.3M478 436h1.3M493.3 436h1.3M508.6 436h1.3M523.9 436h1.3M539.1 436h1.3M554.4 436h1.3M569.7 436h1.3M585 436h1.3M600.2 436h1.3M615.5 436h1.3M630.8 436h1.3M646.1 436h1.3M661.4 436h1.3M676.6 436h1.3M691.9 436h1.3M707.2 436h1.3M722.5 436h1.3M737.8 436h1.3M753 436h1.3M768.3 436h1.3M783.6 436h1.3M798.9 436h1.3M814.2 436h1.3M829.5 436h1.3M844.7 436h1.3M860 436h1.3M875.3 436h1.3M157.1 451.3h1.3M172.4 451.3h1.3M187.7 451.3h1.3M203 451.3h1.3M233.5 451.3h1.3M248.8 451.3h1.3M264.1 451.3h1.3M279.4 451.3h1.3M309.9 451.3h1.3M325.2 451.3h1.3M340.5 451.3h1.3M355.8 451.3h1.3M386.3 451.3h1.3M401.6 451.3h1.3M416.9 451.3h1.3M432.2 451.3h1.3M462.7 451.3h1.3M478 451.3h1.3M493.3 451.3h1.3M508.6 451.3h1.3M539.1 451.3h1.3M554.4 451.3h1.3M569.7 451.3h1.3M585 451.3h1.3M615.5 451.3h1.3M630.8 451.3h1.3M646.1 451.3h1.3M661.4 451.3h1.3M691.9 451.3h1.3M707.2 451.3h1.3M722.5 451.3h1.3M737.8 451.3h1.3M768.3 451.3h1.3M783.6 451.3h1.3M798.9 451.3h1.3M814.2 451.3h1.3M844.7 451.3h1.3M860 451.3h1.3M875.3 451.3h1.3M141.8 466.6h1.3M157.1 466.6h1.3M172.4 466.6h1.3M187.7 466.6h1.3M203 466.6h1.3M218.2 466.6h1.3M233.5 466.6h1.3M248.8 466.6h1.3M264.1 466.6h1.3M279.4 466.6h1.3M294.6 466.6h1.3M309.9 466.6h1.3M325.2 466.6h1.3M340.5 466.6h1.3M355.8 466.6h1.3M371.1 466.6h1.3M386.3 466.6h1.3M401.6 466.6h1.3M416.9 466.6h1.3M432.2 466.6h1.3M447.4 466.6h1.3M462.7 466.6h1.3M478 466.6h1.3M493.3 466.6h1.3M508.6 466.6h1.3M523.9 466.6h1.3M539.1 466.6h1.3M554.4 466.6h1.3M569.7 466.6h1.3M585 466.6h1.3M600.2 466.6h1.3M615.5 466.6h1.3M630.8 466.6h1.3M646.1 466.6h1.3M661.4 466.6h1.3M676.6 466.6h1.3M691.9 466.6h1.3M707.2 466.6h1.3M722.5 466.6h1.3M737.8 466.6h1.3M753 466.6h1.3M768.3 466.6h1.3M783.6 466.6h1.3M798.9 466.6h1.3M814.2 466.6h1.3M829.5 466.6h1.3M844.7 466.6h1.3M860 466.6h1.3M875.3 466.6h1.3M141.8 481.9h1.3M157.1 481.9h1.3M172.4 481.9h1.3M187.7 481.9h1.3M203 481.9h1.3M218.2 481.9h1.3M233.5 481.9h1.3M248.8 481.9h1.3M264.1 481.9h1.3M279.4 481.9h1.3M294.6 481.9h1.3M309.9 481.9h1.3M325.2 481.9h1.3M340.5 481.9h1.3M355.8 481.9h1.3M371.1 481.9h1.3M386.3 481.9h1.3M401.6 481.9h1.3M416.9 481.9h1.3M432.2 481.9h1.3M447.4 481.9h1.3M462.7 481.9h1.3M478 481.9h1.3M493.3 481.9h1.3M508.6 481.9h1.3M523.9 481.9h1.3M539.1 481.9h1.3M554.4 481.9h1.3M569.7 481.9h1.3M585 481.9h1.3M600.2 481.9h1.3M615.5 481.9h1.3M630.8 481.9h1.3M646.1 481.9h1.3M661.4 481.9h1.3M676.6 481.9h1.3M691.9 481.9h1.3M707.2 481.9h1.3M722.5 481.9h1.3M737.8 481.9h1.3M753 481.9h1.3M768.3 481.9h1.3M783.6 481.9h1.3M798.9 481.9h1.3M814.2 481.9h1.3M829.5 481.9h1.3M844.7 481.9h1.3M860 481.9h1.3M875.3 481.9h1.3M141.8 497.1h1.3M157.1 497.1h1.3M172.4 497.1h1.3M187.7 497.1h1.3M203 497.1h1.3M218.2 497.1h1.3M233.5 497.1h1.3M248.8 497.1h1.3M264.1 497.1h1.3M279.4 497.1h1.3M294.6 497.1h1.3M309.9 497.1h1.3M325.2 497.1h1.3M340.5 497.1h1.3M355.8 497.1h1.3M371.1 497.1h1.3M386.3 497.1h1.3M401.6 497.1h1.3M416.9 497.1h1.3M432.2 497.1h1.3M447.4 497.1h1.3M462.7 497.1h1.3M478 497.1h1.3M493.3 497.1h1.3M508.6 497.1h1.3M523.9 497.1h1.3M539.1 497.1h1.3M554.4 497.1h1.3M569.7 497.1h1.3M585 497.1h1.3M600.2 497.1h1.3M615.5 497.1h1.3M630.8 497.1h1.3M646.1 497.1h1.3M661.4 497.1h1.3M676.6 497.1h1.3M691.9 497.1h1.3M707.2 497.1h1.3M722.5 497.1h1.3M737.8 497.1h1.3M753 497.1h1.3M768.3 497.1h1.3M783.6 497.1h1.3M798.9 497.1h1.3M814.2 497.1h1.3M829.5 497.1h1.3M844.7 497.1h1.3M860 497.1h1.3M875.3 497.1h1.3M141.8 512.4h1.3M157.1 512.4h1.3M172.4 512.4h1.3M187.7 512.4h1.3M203 512.4h1.3M218.2 512.4h1.3M233.5 512.4h1.3M248.8 512.4h1.3M264.1 512.4h1.3M279.4 512.4h1.3M294.6 512.4h1.3M309.9 512.4h1.3M325.2 512.4h1.3M340.5 512.4h1.3M355.8 512.4h1.3M371.1 512.4h1.3M386.3 512.4h1.3M401.6 512.4h1.3M416.9 512.4h1.3M432.2 512.4h1.3M447.4 512.4h1.3M462.7 512.4h1.3M478 512.4h1.3M493.3 512.4h1.3M508.6 512.4h1.3M523.9 512.4h1.3M539.1 512.4h1.3M554.4 512.4h1.3M569.7 512.4h1.3M585 512.4h1.3M600.2 512.4h1.3M615.5 512.4h1.3M630.8 512.4h1.3M646.1 512.4h1.3M661.4 512.4h1.3M676.6 512.4h1.3M691.9 512.4h1.3M707.2 512.4h1.3M722.5 512.4h1.3M737.8 512.4h1.3M753 512.4h1.3M768.3 512.4h1.3M783.6 512.4h1.3M798.9 512.4h1.3M814.2 512.4h1.3M829.5 512.4h1.3M844.7 512.4h1.3M860 512.4h1.3M875.3 512.4h1.3M157.1 527.7h1.3M172.4 527.7h1.3M187.7 527.7h1.3M203 527.7h1.3M233.5 527.7h1.3M248.8 527.7h1.3M264.1 527.7h1.3M279.4 527.7h1.3M309.9 527.7h1.3M325.2 527.7h1.3M340.5 527.7h1.3M355.8 527.7h1.3M386.3 527.7h1.3M401.6 527.7h1.3M416.9 527.7h1.3M432.2 527.7h1.3M462.7 527.7h1.3M478 527.7h1.3M493.3 527.7h1.3M508.6 527.7h1.3M539.1 527.7h1.3M554.4 527.7h1.3M569.7 527.7h1.3M585 527.7h1.3M615.5 527.7h1.3M630.8 527.7h1.3M646.1 527.7h1.3M661.4 527.7h1.3M691.9 527.7h1.3M707.2 527.7h1.3M722.5 527.7h1.3M737.8 527.7h1.3M768.3 527.7h1.3M783.6 527.7h1.3M798.9 527.7h1.3M814.2 527.7h1.3M844.7 527.7h1.3M860 527.7h1.3M875.3 527.7h1.3M141.8 543h1.3M157.1 543h1.3M172.4 543h1.3M187.7 543h1.3M203 543h1.3M218.2 543h1.3M233.5 543h1.3M248.8 543h1.3M264.1 543h1.3M279.4 543h1.3M294.6 543h1.3M309.9 543h1.3M325.2 543h1.3M340.5 543h1.3M355.8 543h1.3M371.1 543h1.3M386.3 543h1.3M401.6 543h1.3M416.9 543h1.3M432.2 543h1.3M447.4 543h1.3M462.7 543h1.3M478 543h1.3M493.3 543h1.3M508.6 543h1.3M523.9 543h1.3M539.1 543h1.3M554.4 543h1.3M569.7 543h1.3M585 543h1.3M600.2 543h1.3M615.5 543h1.3M630.8 543h1.3M646.1 543h1.3M661.4 543h1.3M676.6 543h1.3M691.9 543h1.3M707.2 543h1.3M722.5 543h1.3M737.8 543h1.3M753 543h1.3M768.3 543h1.3M783.6 543h1.3M798.9 543h1.3M814.2 543h1.3M829.5 543h1.3M844.7 543h1.3M860 543h1.3M875.3 543h1.3M141.8 558.3h1.3M157.1 558.3h1.3M172.4 558.3h1.3M187.7 558.3h1.3M203 558.3h1.3M218.2 558.3h1.3M233.5 558.3h1.3M248.8 558.3h1.3M264.1 558.3h1.3M279.4 558.3h1.3M294.6 558.3h1.3M309.9 558.3h1.3M325.2 558.3h1.3M340.5 558.3h1.3M355.8 558.3h1.3M371.1 558.3h1.3M386.3 558.3h1.3M401.6 558.3h1.3M416.9 558.3h1.3M432.2 558.3h1.3M447.4 558.3h1.3M462.7 558.3h1.3M478 558.3h1.3M493.3 558.3h1.3M508.6 558.3h1.3M523.9 558.3h1.3M539.1 558.3h1.3M554.4 558.3h1.3M569.7 558.3h1.3M585 558.3h1.3M600.2 558.3h1.3M615.5 558.3h1.3M630.8 558.3h1.3M646.1 558.3h1.3M661.4 558.3h1.3M676.6 558.3h1.3M691.9 558.3h1.3M707.2 558.3h1.3M722.5 558.3h1.3M737.8 558.3h1.3M753 558.3h1.3M768.3 558.3h1.3M783.6 558.3h1.3M798.9 558.3h1.3M814.2 558.3h1.3M829.5 558.3h1.3M844.7 558.3h1.3M860 558.3h1.3M875.3 558.3h1.3M141.8 573.5h1.3M157.1 573.5h1.3M172.4 573.5h1.3M187.7 573.5h1.3M203 573.5h1.3M218.2 573.5h1.3M233.5 573.5h1.3M248.8 573.5h1.3M264.1 573.5h1.3M279.4 573.5h1.3M294.6 573.5h1.3M309.9 573.5h1.3M325.2 573.5h1.3M340.5 573.5h1.3M355.8 573.5h1.3M371.1 573.5h1.3M386.3 573.5h1.3M401.6 573.5h1.3M416.9 573.5h1.3M432.2 573.5h1.3M447.4 573.5h1.3M462.7 573.5h1.3M478 573.5h1.3M493.3 573.5h1.3M508.6 573.5h1.3M523.9 573.5h1.3M539.1 573.5h1.3M554.4 573.5h1.3M569.7 573.5h1.3M585 573.5h1.3M600.2 573.5h1.3M615.5 573.5h1.3M630.8 573.5h1.3M646.1 573.5h1.3M661.4 573.5h1.3M676.6 573.5h1.3M691.9 573.5h1.3M707.2 573.5h1.3M722.5 573.5h1.3M737.8 573.5h1.3M753 573.5h1.3M768.3 573.5h1.3M783.6 573.5h1.3M798.9 573.5h1.3M814.2 573.5h1.3M829.5 573.5h1.3M844.7 573.5h1.3M860 573.5h1.3M875.3 573.5h1.3M141.8 588.8h1.3M157.1 588.8h1.3M172.4 588.8h1.3M187.7 588.8h1.3M203 588.8h1.3M218.2 588.8h1.3M233.5 588.8h1.3M248.8 588.8h1.3M264.1 588.8h1.3M279.4 588.8h1.3M294.6 588.8h1.3M309.9 588.8h1.3M325.2 588.8h1.3M340.5 588.8h1.3M355.8 588.8h1.3M371.1 588.8h1.3M386.3 588.8h1.3M401.6 588.8h1.3M416.9 588.8h1.3M432.2 588.8h1.3M447.4 588.8h1.3M462.7 588.8h1.3M478 588.8h1.3M493.3 588.8h1.3M508.6 588.8h1.3M523.9 588.8h1.3M539.1 588.8h1.3M554.4 588.8h1.3M569.7 588.8h1.3M585 588.8h1.3M600.2 588.8h1.3M615.5 588.8h1.3M630.8 588.8h1.3M646.1 588.8h1.3M661.4 588.8h1.3M676.6 588.8h1.3M691.9 588.8h1.3M707.2 588.8h1.3M722.5 588.8h1.3M737.8 588.8h1.3M753 588.8h1.3M768.3 588.8h1.3M783.6 588.8h1.3M798.9 588.8h1.3M814.2 588.8h1.3M829.5 588.8h1.3M844.7 588.8h1.3M860 588.8h1.3M875.3 588.8h1.3M157.1 604.1h1.3M172.4 604.1h1.3M187.7 604.1h1.3M203 604.1h1.3M233.5 604.1h1.3M248.8 604.1h1.3M264.1 604.1h1.3M279.4 604.1h1.3M309.9 604.1h1.3M325.2 604.1h1.3M340.5 604.1h1.3M355.8 604.1h1.3M386.3 604.1h1.3M401.6 604.1h1.3M416.9 604.1h1.3M432.2 604.1h1.3M462.7 604.1h1.3M478 604.1h1.3M493.3 604.1h1.3M508.6 604.1h1.3M539.1 604.1h1.3M554.4 604.1h1.3M569.7 604.1h1.3M585 604.1h1.3M615.5 604.1h1.3M630.8 604.1h1.3M646.1 604.1h1.3M661.4 604.1h1.3M691.9 604.1h1.3M707.2 604.1h1.3M722.5 604.1h1.3M737.8 604.1h1.3M768.3 604.1h1.3M783.6 604.1h1.3M798.9 604.1h1.3M814.2 604.1h1.3M844.7 604.1h1.3M860 604.1h1.3M875.3 604.1h1.3M141.8 619.4h1.3M157.1 619.4h1.3M172.4 619.4h1.3M187.7 619.4h1.3M203 619.4h1.3M218.2 619.4h1.3M233.5 619.4h1.3M248.8 619.4h1.3M264.1 619.4h1.3M279.4 619.4h1.3M294.6 619.4h1.3M309.9 619.4h1.3M325.2 619.4h1.3M340.5 619.4h1.3M355.8 619.4h1.3M371.1 619.4h1.3M386.3 619.4h1.3M401.6 619.4h1.3M416.9 619.4h1.3M432.2 619.4h1.3M447.4 619.4h1.3M462.7 619.4h1.3M478 619.4h1.3M493.3 619.4h1.3M508.6 619.4h1.3M523.9 619.4h1.3M539.1 619.4h1.3M554.4 619.4h1.3M569.7 619.4h1.3M585 619.4h1.3M600.2 619.4h1.3M615.5 619.4h1.3M630.8 619.4h1.3M646.1 619.4h1.3M661.4 619.4h1.3M676.6 619.4h1.3M691.9 619.4h1.3M707.2 619.4h1.3M722.5 619.4h1.3M737.8 619.4h1.3M753 619.4h1.3M768.3 619.4h1.3M783.6 619.4h1.3M798.9 619.4h1.3M814.2 619.4h1.3M829.5 619.4h1.3M844.7 619.4h1.3M860 619.4h1.3M875.3 619.4h1.3M141.8 634.7h1.3M157.1 634.7h1.3M172.4 634.7h1.3M187.7 634.7h1.3M203 634.7h1.3M218.2 634.7h1.3M233.5 634.7h1.3M248.8 634.7h1.3M264.1 634.7h1.3M279.4 634.7h1.3M294.6 634.7h1.3M309.9 634.7h1.3M325.2 634.7h1.3M340.5 634.7h1.3M355.8 634.7h1.3M371.1 634.7h1.3M386.3 634.7h1.3M401.6 634.7h1.3M416.9 634.7h1.3M432.2 634.7h1.3M447.4 634.7h1.3M462.7 634.7h1.3M478 634.7h1.3M493.3 634.7h1.3M508.6 634.7h1.3M523.9 634.7h1.3M539.1 634.7h1.3M554.4 634.7h1.3M569.7 634.7h1.3M585 634.7h1.3M600.2 634.7h1.3M615.5 634.7h1.3M630.8 634.7h1.3M646.1 634.7h1.3M661.4 634.7h1.3M676.6 634.7h1.3M691.9 634.7h1.3M707.2 634.7h1.3M722.5 634.7h1.3M737.8 634.7h1.3M753 634.7h1.3M768.3 634.7h1.3M783.6 634.7h1.3M798.9 634.7h1.3M814.2 634.7h1.3M829.5 634.7h1.3M844.7 634.7h1.3M860 634.7h1.3M875.3 634.7h1.3M141.8 649.9h1.3M157.1 649.9h1.3M172.4 649.9h1.3M187.7 649.9h1.3M203 649.9h1.3M218.2 649.9h1.3M233.5 649.9h1.3M248.8 649.9h1.3M264.1 649.9h1.3M279.4 649.9h1.3M294.6 649.9h1.3M309.9 649.9h1.3M325.2 649.9h1.3M340.5 649.9h1.3M355.8 649.9h1.3M371.1 649.9h1.3M386.3 649.9h1.3M401.6 649.9h1.3M416.9 649.9h1.3M432.2 649.9h1.3M447.4 649.9h1.3M462.7 649.9h1.3M478 649.9h1.3M493.3 649.9h1.3M508.6 649.9h1.3M523.9 649.9h1.3M539.1 649.9h1.3M554.4 649.9h1.3M569.7 649.9h1.3M585 649.9h1.3M600.2 649.9h1.3M615.5 649.9h1.3M630.8 649.9h1.3M646.1 649.9h1.3M661.4 649.9h1.3M676.6 649.9h1.3M691.9 649.9h1.3M707.2 649.9h1.3M722.5 649.9h1.3M737.8 649.9h1.3M753 649.9h1.3M768.3 649.9h1.3M783.6 649.9h1.3M798.9 649.9h1.3M814.2 649.9h1.3M829.5 649.9h1.3M844.7 649.9h1.3M860 649.9h1.3M875.3 649.9h1.3M141.8 665.2h1.3M157.1 665.2h1.3M172.4 665.2h1.3M187.7 665.2h1.3M203 665.2h1.3M218.2 665.2h1.3M233.5 665.2h1.3M248.8 665.2h1.3M264.1 665.2h1.3M279.4 665.2h1.3M294.6 665.2h1.3M309.9 665.2h1.3M325.2 665.2h1.3M340.5 665.2h1.3M355.8 665.2h1.3M371.1 665.2h1.3M386.3 665.2h1.3M401.6 665.2h1.3M416.9 665.2h1.3M432.2 665.2h1.3M447.4 665.2h1.3M462.7 665.2h1.3M478 665.2h1.3M493.3 665.2h1.3M508.6 665.2h1.3M523.9 665.2h1.3M539.1 665.2h1.3M554.4 665.2h1.3M569.7 665.2h1.3M585 665.2h1.3M600.2 665.2h1.3M615.5 665.2h1.3M630.8 665.2h1.3M646.1 665.2h1.3M661.4 665.2h1.3M676.6 665.2h1.3M691.9 665.2h1.3M707.2 665.2h1.3M722.5 665.2h1.3M737.8 665.2h1.3M753 665.2h1.3M768.3 665.2h1.3M783.6 665.2h1.3M798.9 665.2h1.3M814.2 665.2h1.3M829.5 665.2h1.3M844.7 665.2h1.3M860 665.2h1.3M875.3 665.2h1.3M157.1 680.5h1.3M172.4 680.5h1.3M187.7 680.5h1.3M203 680.5h1.3M233.5 680.5h1.3M248.8 680.5h1.3M264.1 680.5h1.3M279.4 680.5h1.3M309.9 680.5h1.3M325.2 680.5h1.3M340.5 680.5h1.3M355.8 680.5h1.3M386.3 680.5h1.3M401.6 680.5h1.3M416.9 680.5h1.3M432.2 680.5h1.3M462.7 680.5h1.3M478 680.5h1.3M493.3 680.5h1.3M508.6 680.5h1.3M539.1 680.5h1.3M554.4 680.5h1.3M569.7 680.5h1.3M585 680.5h1.3M615.5 680.5h1.3M630.8 680.5h1.3M646.1 680.5h1.3M661.4 680.5h1.3M691.9 680.5h1.3M707.2 680.5h1.3M722.5 680.5h1.3M737.8 680.5h1.3M768.3 680.5h1.3M783.6 680.5h1.3M798.9 680.5h1.3M814.2 680.5h1.3M844.7 680.5h1.3M860 680.5h1.3M875.3 680.5h1.3M141.8 695.8h1.3M157.1 695.8h1.3M172.4 695.8h1.3M187.7 695.8h1.3M203 695.8h1.3M218.2 695.8h1.3M233.5 695.8h1.3M248.8 695.8h1.3M264.1 695.8h1.3M279.4 695.8h1.3M294.6 695.8h1.3M309.9 695.8h1.3M325.2 695.8h1.3M340.5 695.8h1.3M355.8 695.8h1.3M371.1 695.8h1.3M386.3 695.8h1.3M401.6 695.8h1.3M416.9 695.8h1.3M432.2 695.8h1.3M447.4 695.8h1.3M462.7 695.8h1.3M478 695.8h1.3M493.3 695.8h1.3M508.6 695.8h1.3M523.9 695.8h1.3M539.1 695.8h1.3M554.4 695.8h1.3M569.7 695.8h1.3M585 695.8h1.3M600.2 695.8h1.3M615.5 695.8h1.3M630.8 695.8h1.3M646.1 695.8h1.3M661.4 695.8h1.3M676.6 695.8h1.3M691.9 695.8h1.3M707.2 695.8h1.3M722.5 695.8h1.3M737.8 695.8h1.3M753 695.8h1.3M768.3 695.8h1.3M783.6 695.8h1.3M798.9 695.8h1.3M814.2 695.8h1.3M829.5 695.8h1.3M844.7 695.8h1.3M860 695.8h1.3M875.3 695.8h1.3M141.8 711.1h1.3M157.1 711.1h1.3M172.4 711.1h1.3M187.7 711.1h1.3M203 711.1h1.3M218.2 711.1h1.3M233.5 711.1h1.3M248.8 711.1h1.3M264.1 711.1h1.3M279.4 711.1h1.3M294.6 711.1h1.3M309.9 711.1h1.3M325.2 711.1h1.3M340.5 711.1h1.3M355.8 711.1h1.3M371.1 711.1h1.3M386.3 711.1h1.3M401.6 711.1h1.3M416.9 711.1h1.3M432.2 711.1h1.3M447.4 711.1h1.3M462.7 711.1h1.3M478 711.1h1.3M493.3 711.1h1.3M508.6 711.1h1.3M523.9 711.1h1.3M539.1 711.1h1.3M554.4 711.1h1.3M569.7 711.1h1.3M585 711.1h1.3M600.2 711.1h1.3M615.5 711.1h1.3M630.8 711.1h1.3M646.1 711.1h1.3M661.4 711.1h1.3M676.6 711.1h1.3M691.9 711.1h1.3M707.2 711.1h1.3M722.5 711.1h1.3M737.8 711.1h1.3M753 711.1h1.3M768.3 711.1h1.3M783.6 711.1h1.3M798.9 711.1h1.3M814.2 711.1h1.3M829.5 711.1h1.3M844.7 711.1h1.3M860 711.1h1.3M875.3 711.1h1.3M141.8 726.3h1.3M157.1 726.3h1.3M172.4 726.3h1.3M187.7 726.3h1.3M203 726.3h1.3M218.2 726.3h1.3M233.5 726.3h1.3M248.8 726.3h1.3M264.1 726.3h1.3M279.4 726.3h1.3M294.6 726.3h1.3M309.9 726.3h1.3M325.2 726.3h1.3M340.5 726.3h1.3M355.8 726.3h1.3M371.1 726.3h1.3M386.3 726.3h1.3M401.6 726.3h1.3M416.9 726.3h1.3M432.2 726.3h1.3M447.4 726.3h1.3M462.7 726.3h1.3M478 726.3h1.3M493.3 726.3h1.3M508.6 726.3h1.3M523.9 726.3h1.3M539.1 726.3h1.3M554.4 726.3h1.3M569.7 726.3h1.3M585 726.3h1.3M600.2 726.3h1.3M615.5 726.3h1.3M630.8 726.3h1.3M646.1 726.3h1.3M661.4 726.3h1.3M676.6 726.3h1.3M691.9 726.3h1.3M707.2 726.3h1.3M722.5 726.3h1.3M737.8 726.3h1.3M753 726.3h1.3M768.3 726.3h1.3M783.6 726.3h1.3M798.9 726.3h1.3M814.2 726.3h1.3M829.5 726.3h1.3M844.7 726.3h1.3M860 726.3h1.3M875.3 726.3h1.3M141.8 741.6h1.3M157.1 741.6h1.3M172.4 741.6h1.3M187.7 741.6h1.3M203 741.6h1.3M218.2 741.6h1.3M233.5 741.6h1.3M248.8 741.6h1.3M264.1 741.6h1.3M279.4 741.6h1.3M294.6 741.6h1.3M309.9 741.6h1.3M325.2 741.6h1.3M340.5 741.6h1.3M355.8 741.6h1.3M371.1 741.6h1.3M386.3 741.6h1.3M401.6 741.6h1.3M416.9 741.6h1.3M432.2 741.6h1.3M447.4 741.6h1.3M462.7 741.6h1.3M478 741.6h1.3M493.3 741.6h1.3M508.6 741.6h1.3M523.9 741.6h1.3M539.1 741.6h1.3M554.4 741.6h1.3M569.7 741.6h1.3M585 741.6h1.3M600.2 741.6h1.3M615.5 741.6h1.3M630.8 741.6h1.3M646.1 741.6h1.3M661.4 741.6h1.3M676.6 741.6h1.3M691.9 741.6h1.3M707.2 741.6h1.3M722.5 741.6h1.3M737.8 741.6h1.3M753 741.6h1.3M768.3 741.6h1.3M783.6 741.6h1.3M798.9 741.6h1.3M814.2 741.6h1.3M829.5 741.6h1.3M844.7 741.6h1.3M860 741.6h1.3M875.3 741.6h1.3M157.1 756.9h1.3M172.4 756.9h1.3M187.7 756.9h1.3M203 756.9h1.3M233.5 756.9h1.3M248.8 756.9h1.3M264.1 756.9h1.3M279.4 756.9h1.3M309.9 756.9h1.3M325.2 756.9h1.3M340.5 756.9h1.3M355.8 756.9h1.3M386.3 756.9h1.3M401.6 756.9h1.3M416.9 756.9h1.3M432.2 756.9h1.3M462.7 756.9h1.3M478 756.9h1.3M493.3 756.9h1.3M508.6 756.9h1.3M539.1 756.9h1.3M554.4 756.9h1.3M569.7 756.9h1.3M585 756.9h1.3M615.5 756.9h1.3M630.8 756.9h1.3M646.1 756.9h1.3M661.4 756.9h1.3M691.9 756.9h1.3M707.2 756.9h1.3M722.5 756.9h1.3M737.8 756.9h1.3M768.3 756.9h1.3M783.6 756.9h1.3M798.9 756.9h1.3M814.2 756.9h1.3M844.7 756.9h1.3M860 756.9h1.3M875.3 756.9h1.3" stroke="#6846d6" stroke-width="1.5" fill="none" opacity="0.85"/>
<path d="M138.8 69.3h7.4M142.5 66.3v6M215.2 69.3h7.4M218.9 66.3v6M291.6 69.3h7.4M295.3 66.3v6M368 69.3h7.4M371.7 66.3v6M444.4 69.3h7.4M448.1 66.3v6M520.8 69.3h7.4M524.5 66.3v6M597.2 69.3h7.4M600.9 66.3v6M673.6 69.3h7.4M677.3 66.3v6M750 69.3h7.4M753.7 66.3v6M826.4 69.3h7.4M830.1 66.3v6M138.8 145.7h7.4M142.5 142.7v6M215.2 145.7h7.4M218.9 142.7v6M291.6 145.7h7.4M295.3 142.7v6M368 145.7h7.4M371.7 142.7v6M444.4 145.7h7.4M448.1 142.7v6M520.8 145.7h7.4M524.5 142.7v6M597.2 145.7h7.4M600.9 142.7v6M673.6 145.7h7.4M677.3 142.7v6M750 145.7h7.4M753.7 142.7v6M826.4 145.7h7.4M830.1 142.7v6M138.8 222.1h7.4M142.5 219.1v6M215.2 222.1h7.4M218.9 219.1v6M291.6 222.1h7.4M295.3 219.1v6M368 222.1h7.4M371.7 219.1v6M444.4 222.1h7.4M448.1 219.1v6M520.8 222.1h7.4M524.5 219.1v6M597.2 222.1h7.4M600.9 219.1v6M673.6 222.1h7.4M677.3 219.1v6M750 222.1h7.4M753.7 219.1v6M826.4 222.1h7.4M830.1 219.1v6M138.8 298.5h7.4M142.5 295.5v6M215.2 298.5h7.4M218.9 295.5v6M291.6 298.5h7.4M295.3 295.5v6M368 298.5h7.4M371.7 295.5v6M444.4 298.5h7.4M448.1 295.5v6M520.8 298.5h7.4M524.5 295.5v6M597.2 298.5h7.4M600.9 295.5v6M673.6 298.5h7.4M677.3 295.5v6M750 298.5h7.4M753.7 295.5v6M826.4 298.5h7.4M830.1 295.5v6M138.8 374.9h7.4M142.5 371.9v6M215.2 374.9h7.4M218.9 371.9v6M291.6 374.9h7.4M295.3 371.9v6M368 374.9h7.4M371.7 371.9v6M444.4 374.9h7.4M448.1 371.9v6M520.8 374.9h7.4M524.5 371.9v6M597.2 374.9h7.4M600.9 371.9v6M673.6 374.9h7.4M677.3 371.9v6M750 374.9h7.4M753.7 371.9v6M826.4 374.9h7.4M830.1 371.9v6M138.8 451.3h7.4M142.5 448.3v6M215.2 451.3h7.4M218.9 448.3v6M291.6 451.3h7.4M295.3 448.3v6M368 451.3h7.4M371.7 448.3v6M444.4 451.3h7.4M448.1 448.3v6M520.8 451.3h7.4M524.5 448.3v6M597.2 451.3h7.4M600.9 448.3v6M673.6 451.3h7.4M677.3 448.3v6M750 451.3h7.4M753.7 448.3v6M826.4 451.3h7.4M830.1 448.3v6M138.8 527.7h7.4M142.5 524.7v6M215.2 527.7h7.4M218.9 524.7v6M291.6 527.7h7.4M295.3 524.7v6M368 527.7h7.4M371.7 524.7v6M444.4 527.7h7.4M448.1 524.7v6M520.8 527.7h7.4M524.5 524.7v6M597.2 527.7h7.4M600.9 524.7v6M673.6 527.7h7.4M677.3 524.7v6M750 527.7h7.4M753.7 524.7v6M826.4 527.7h7.4M830.1 524.7v6M138.8 604.1h7.4M142.5 601.1v6M215.2 604.1h7.4M218.9 601.1v6M291.6 604.1h7.4M295.3 601.1v6M368 604.1h7.4M371.7 601.1v6M444.4 604.1h7.4M448.1 601.1v6M520.8 604.1h7.4M524.5 601.1v6M597.2 604.1h7.4M600.9 601.1v6M673.6 604.1h7.4M677.3 601.1v6M750 604.1h7.4M753.7 601.1v6M826.4 604.1h7.4M830.1 601.1v6M138.8 680.5h7.4M142.5 677.5v6M215.2 680.5h7.4M218.9 677.5v6M291.6 680.5h7.4M295.3 677.5v6M368 680.5h7.4M371.7 677.5v6M444.4 680.5h7.4M448.1 677.5v6M520.8 680.5h7.4M524.5 677.5v6M597.2 680.5h7.4M600.9 677.5v6M673.6 680.5h7.4M677.3 677.5v6M750 680.5h7.4M753.7 677.5v6M826.4 680.5h7.4M830.1 677.5v6M138.8 756.9h7.4M142.5 753.9v6M215.2 756.9h7.4M218.9 753.9v6M291.6 756.9h7.4M295.3 753.9v6M368 756.9h7.4M371.7 753.9v6M444.4 756.9h7.4M448.1 753.9v6M520.8 756.9h7.4M524.5 753.9v6M597.2 756.9h7.4M600.9 753.9v6M673.6 756.9h7.4M677.3 753.9v6M750 756.9h7.4M753.7 753.9v6M826.4 756.9h7.4M830.1 753.9v6" stroke="#e020f4" stroke-width="1.5" fill="none"/>
<path d="M142.5 116.1H869" stroke="#b81cb4" stroke-width="1.6" stroke-dasharray="6.6 5.6" fill="none"/>
<path d="M509.1 65V760M142.5 591.5H879" stroke="#aa1ea4" stroke-width="1.5" fill="none"/>
<path d="M681 275v20M685 272v24M776 288.5h52M760 264.5h66.5v23" stroke="#2e2eaa" stroke-width="1" fill="none" opacity="0.7"/>
<circle cx="493.4" cy="172.4" r="9.3" fill="none" stroke="#c4121c" stroke-width="1.5"/>
<circle cx="491.6" cy="194.2" r="9.3" fill="none" stroke="#c4121c" stroke-width="1.5"/>
<circle cx="494.8" cy="202.9" r="9.3" fill="none" stroke="#c4121c" stroke-width="1.5"/>
<circle cx="491.2" cy="224.4" r="9.3" fill="none" stroke="#c4121c" stroke-width="1.5"/>
<circle cx="494.6" cy="258.2" r="9.3" fill="none" stroke="#c4121c" stroke-width="1.5"/>
<circle cx="491.5" cy="279.2" r="9.3" fill="none" stroke="#c4121c" stroke-width="1.5"/>
<circle cx="494.6" cy="311" r="9.3" fill="none" stroke="#c4121c" stroke-width="1.5"/>
<circle cx="526" cy="343.4" r="9.3" fill="none" stroke="#c4121c" stroke-width="1.5"/>
<circle cx="557.6" cy="344" r="9.3" fill="none" stroke="#c4121c" stroke-width="1.5"/>
<circle cx="580.2" cy="343.4" r="9.3" fill="none" stroke="#c4121c" stroke-width="1.5"/>
<circle cx="662.2" cy="343.4" r="9.3" fill="none" stroke="#c4121c" stroke-width="1.5"/>
<circle cx="692.9" cy="343.4" r="9.3" fill="none" stroke="#c4121c" stroke-width="1.5"/>
<circle cx="291.2" cy="453.5" r="9.3" fill="none" stroke="#c4121c" stroke-width="1.5"/>
<circle cx="305.7" cy="468" r="9.3" fill="none" stroke="#c4121c" stroke-width="1.5"/>
<circle cx="320.3" cy="482.1" r="9.3" fill="none" stroke="#c4121c" stroke-width="1.5"/>
<circle cx="334.9" cy="496.3" r="9.3" fill="none" stroke="#c4121c" stroke-width="1.5"/>
<circle cx="690" cy="468" r="9.3" fill="none" stroke="#c4121c" stroke-width="1.5"/>
<circle cx="665" cy="493.1" r="9.3" fill="none" stroke="#c4121c" stroke-width="1.5"/>
<circle cx="651.2" cy="506.9" r="9.3" fill="none" stroke="#c4121c" stroke-width="1.5"/>
<circle cx="636.6" cy="521.4" r="9.3" fill="none" stroke="#c4121c" stroke-width="1.5"/>
<circle cx="622.4" cy="535.2" r="9.3" fill="none" stroke="#c4121c" stroke-width="1.5"/>
<g fill="#fff"><circle cx="493.3" cy="129.9" r="2.02"/><circle cx="493.3" cy="140.6" r="2.02"/><circle cx="493.3" cy="151.2" r="2.02"/><circle cx="493.3" cy="161.9" r="2.02"/><circle cx="493.3" cy="172.6" r="2.02"/><circle cx="493.3" cy="183.3" r="2.02"/><circle cx="493.3" cy="194" r="2.02"/><circle cx="493.3" cy="204.6" r="2.02"/><circle cx="493.3" cy="215.3" r="2.02"/><circle cx="493.3" cy="226" r="2.02"/><circle cx="493.3" cy="236.7" r="2.02"/><circle cx="493.3" cy="247.3" r="2.02"/><circle cx="493.3" cy="258" r="2.02"/><circle cx="493.3" cy="268.7" r="2.02"/><circle cx="493.3" cy="279.4" r="2.02"/><circle cx="493.3" cy="290" r="2.02"/><circle cx="493.3" cy="300.7" r="2.02"/><circle cx="493.3" cy="311.4" r="2.02"/><circle cx="493.3" cy="322.1" r="2.02"/><circle cx="493.3" cy="332.7" r="2.02"/><circle cx="493.3" cy="343.4" r="2.02"/><circle cx="493.3" cy="354.1" r="2.02"/><circle cx="493.3" cy="364.8" r="2.02"/><circle cx="493.3" cy="375.4" r="2.02"/><circle cx="493.3" cy="386.1" r="2.02"/><circle cx="493.3" cy="396.8" r="2.02"/><circle cx="493.3" cy="407.5" r="2.02"/><circle cx="493.3" cy="418.1" r="2.02"/><circle cx="493.3" cy="428.8" r="2.02"/><circle cx="493.3" cy="439.5" r="2.02"/><circle cx="493.3" cy="450.1" r="2.02"/><circle cx="500.7" cy="137.3" r="2.02"/><circle cx="508.7" cy="145.3" r="2.02"/><circle cx="516.1" cy="152.7" r="2.02"/><circle cx="524.1" cy="160.7" r="2.02"/><circle cx="531.5" cy="168.1" r="2.02"/><circle cx="539.5" cy="176.1" r="2.02"/><circle cx="546.9" cy="183.5" r="2.02"/><circle cx="554.9" cy="191.5" r="2.02"/><circle cx="562.3" cy="198.9" r="2.02"/><circle cx="570.3" cy="206.9" r="2.02"/><circle cx="577.7" cy="214.3" r="2.02"/><circle cx="585.7" cy="222.3" r="2.02"/><circle cx="593.1" cy="229.7" r="2.02"/><circle cx="601.1" cy="237.7" r="2.02"/><circle cx="608.5" cy="245.1" r="2.02"/><circle cx="616.5" cy="253.1" r="2.02"/><circle cx="623.9" cy="260.5" r="2.02"/><circle cx="631.9" cy="268.5" r="2.02"/><circle cx="639.3" cy="275.9" r="2.02"/><circle cx="647.3" cy="283.9" r="2.02"/><circle cx="654.7" cy="291.3" r="2.02"/><circle cx="662.7" cy="299.3" r="2.02"/><circle cx="670.1" cy="306.7" r="2.02"/><circle cx="678.1" cy="314.7" r="2.02"/><circle cx="685.5" cy="322.1" r="2.02"/><circle cx="693.5" cy="330.1" r="2.02"/><circle cx="700.9" cy="337.5" r="2.02"/><circle cx="569.6" cy="193.7" r="2.02"/><circle cx="575.7" cy="199.8" r="2.02"/><circle cx="581.8" cy="205.9" r="2.02"/><circle cx="588" cy="212.1" r="2.02"/><circle cx="594.1" cy="218.2" r="2.02"/><circle cx="600.2" cy="224.3" r="2.02"/><circle cx="606.3" cy="230.4" r="2.02"/><circle cx="502.4" cy="154.2" r="2.02"/><circle cx="508.5" cy="160.3" r="2.02"/><circle cx="514.7" cy="166.5" r="2.02"/><circle cx="520.8" cy="172.6" r="2.02"/><circle cx="526.9" cy="178.7" r="2.02"/><circle cx="533" cy="184.8" r="2.02"/><circle cx="539.2" cy="191" r="2.02"/><circle cx="545.3" cy="197.1" r="2.02"/><circle cx="551.4" cy="203.2" r="2.02"/><circle cx="557.6" cy="209.4" r="2.02"/><circle cx="563.7" cy="215.5" r="2.02"/><circle cx="569.8" cy="221.6" r="2.02"/><circle cx="576" cy="227.8" r="2.02"/><circle cx="582.1" cy="233.9" r="2.02"/><circle cx="588.2" cy="240" r="2.02"/><circle cx="594.3" cy="246.1" r="2.02"/><circle cx="600.5" cy="252.3" r="2.02"/><circle cx="606.6" cy="258.4" r="2.02"/><circle cx="612.7" cy="264.5" r="2.02"/><circle cx="618.9" cy="270.7" r="2.02"/><circle cx="625" cy="276.8" r="2.02"/><circle cx="631.1" cy="282.9" r="2.02"/><circle cx="637.3" cy="289.1" r="2.02"/><circle cx="643.4" cy="295.2" r="2.02"/><circle cx="649.5" cy="301.3" r="2.02"/><circle cx="655.6" cy="307.4" r="2.02"/><circle cx="661.8" cy="313.6" r="2.02"/><circle cx="667.9" cy="319.7" r="2.02"/><circle cx="674" cy="325.8" r="2.02"/><circle cx="680.2" cy="332" r="2.02"/><circle cx="686.3" cy="338.1" r="2.02"/><circle cx="692.4" cy="344.2" r="2.02"/><circle cx="483.9" cy="163.1" r="2.02"/><circle cx="490" cy="169.3" r="2.02"/><circle cx="496.2" cy="175.4" r="2.02"/><circle cx="502.3" cy="181.5" r="2.02"/><circle cx="508.4" cy="187.6" r="2.02"/><circle cx="514.5" cy="193.8" r="2.02"/><circle cx="520.7" cy="199.9" r="2.02"/><circle cx="526.8" cy="206" r="2.02"/><circle cx="532.9" cy="212.2" r="2.02"/><circle cx="539.1" cy="218.3" r="2.02"/><circle cx="545.2" cy="224.4" r="2.02"/><circle cx="551.3" cy="230.6" r="2.02"/><circle cx="557.5" cy="236.7" r="2.02"/><circle cx="563.6" cy="242.8" r="2.02"/><circle cx="569.7" cy="248.9" r="2.02"/><circle cx="575.8" cy="255.1" r="2.02"/><circle cx="582" cy="261.2" r="2.02"/><circle cx="588.1" cy="267.3" r="2.02"/><circle cx="594.2" cy="273.5" r="2.02"/><circle cx="600.4" cy="279.6" r="2.02"/><circle cx="606.5" cy="285.7" r="2.02"/><circle cx="612.6" cy="291.9" r="2.02"/><circle cx="618.8" cy="298" r="2.02"/><circle cx="624.9" cy="304.1" r="2.02"/><circle cx="631" cy="310.2" r="2.02"/><circle cx="637.1" cy="316.4" r="2.02"/><circle cx="643.3" cy="322.5" r="2.02"/><circle cx="649.4" cy="328.6" r="2.02"/><circle cx="655.5" cy="334.8" r="2.02"/><circle cx="661.7" cy="340.9" r="2.02"/><circle cx="490" cy="196.7" r="2.02"/><circle cx="496.1" cy="202.8" r="2.02"/><circle cx="502.3" cy="208.9" r="2.02"/><circle cx="508.4" cy="215.1" r="2.02"/><circle cx="514.5" cy="221.2" r="2.02"/><circle cx="520.6" cy="227.3" r="2.02"/><circle cx="526.8" cy="233.4" r="2.02"/><circle cx="532.9" cy="239.6" r="2.02"/><circle cx="539" cy="245.7" r="2.02"/><circle cx="545.2" cy="251.8" r="2.02"/><circle cx="551.3" cy="258" r="2.02"/><circle cx="557.4" cy="264.1" r="2.02"/><circle cx="563.6" cy="270.2" r="2.02"/><circle cx="569.7" cy="276.3" r="2.02"/><circle cx="575.8" cy="282.5" r="2.02"/><circle cx="581.9" cy="288.6" r="2.02"/><circle cx="588.1" cy="294.7" r="2.02"/><circle cx="594.2" cy="300.9" r="2.02"/><circle cx="600.3" cy="307" r="2.02"/><circle cx="606.5" cy="313.1" r="2.02"/><circle cx="612.6" cy="319.3" r="2.02"/><circle cx="618.7" cy="325.4" r="2.02"/><circle cx="624.9" cy="331.5" r="2.02"/><circle cx="631" cy="337.6" r="2.02"/><circle cx="637.1" cy="343.8" r="2.02"/><circle cx="490" cy="224.1" r="2.02"/><circle cx="496.1" cy="230.2" r="2.02"/><circle cx="502.3" cy="236.4" r="2.02"/><circle cx="508.4" cy="242.5" r="2.02"/><circle cx="514.5" cy="248.6" r="2.02"/><circle cx="520.6" cy="254.7" r="2.02"/><circle cx="526.8" cy="260.9" r="2.02"/><circle cx="532.9" cy="267" r="2.02"/><circle cx="539" cy="273.1" r="2.02"/><circle cx="545.2" cy="279.3" r="2.02"/><circle cx="551.3" cy="285.4" r="2.02"/><circle cx="557.4" cy="291.5" r="2.02"/><circle cx="563.6" cy="297.6" r="2.02"/><circle cx="569.7" cy="303.8" r="2.02"/><circle cx="575.8" cy="309.9" r="2.02"/><circle cx="581.9" cy="316" r="2.02"/><circle cx="588.1" cy="322.2" r="2.02"/><circle cx="594.2" cy="328.3" r="2.02"/><circle cx="600.3" cy="334.4" r="2.02"/><circle cx="606.5" cy="340.6" r="2.02"/><circle cx="490" cy="251.5" r="2.02"/><circle cx="496.1" cy="257.6" r="2.02"/><circle cx="502.3" cy="263.8" r="2.02"/><circle cx="508.4" cy="269.9" r="2.02"/><circle cx="514.5" cy="276" r="2.02"/><circle cx="520.6" cy="282.2" r="2.02"/><circle cx="526.8" cy="288.3" r="2.02"/><circle cx="532.9" cy="294.4" r="2.02"/><circle cx="539" cy="300.6" r="2.02"/><circle cx="545.2" cy="306.7" r="2.02"/><circle cx="551.3" cy="312.8" r="2.02"/><circle cx="557.4" cy="318.9" r="2.02"/><circle cx="563.6" cy="325.1" r="2.02"/><circle cx="569.7" cy="331.2" r="2.02"/><circle cx="575.8" cy="337.3" r="2.02"/><circle cx="581.9" cy="343.5" r="2.02"/><circle cx="490" cy="279" r="2.02"/><circle cx="496.1" cy="285.1" r="2.02"/><circle cx="502.3" cy="291.2" r="2.02"/><circle cx="508.4" cy="297.3" r="2.02"/><circle cx="514.5" cy="303.5" r="2.02"/><circle cx="520.6" cy="309.6" r="2.02"/><circle cx="526.8" cy="315.7" r="2.02"/><circle cx="532.9" cy="321.9" r="2.02"/><circle cx="539" cy="328" r="2.02"/><circle cx="545.2" cy="334.1" r="2.02"/><circle cx="551.3" cy="340.2" r="2.02"/><circle cx="490" cy="306.4" r="2.02"/><circle cx="496.1" cy="312.5" r="2.02"/><circle cx="502.3" cy="318.6" r="2.02"/><circle cx="508.4" cy="324.8" r="2.02"/><circle cx="514.5" cy="330.9" r="2.02"/><circle cx="520.6" cy="337" r="2.02"/><circle cx="526.8" cy="343.2" r="2.02"/><circle cx="493.3" cy="343.4" r="2.02"/><circle cx="503.9" cy="343.4" r="2.02"/><circle cx="514.5" cy="343.4" r="2.02"/><circle cx="525.2" cy="343.4" r="2.02"/><circle cx="535.8" cy="343.4" r="2.02"/><circle cx="546.4" cy="343.4" r="2.02"/><circle cx="557" cy="343.4" r="2.02"/><circle cx="567.6" cy="343.4" r="2.02"/><circle cx="578.3" cy="343.4" r="2.02"/><circle cx="588.9" cy="343.4" r="2.02"/><circle cx="599.5" cy="343.4" r="2.02"/><circle cx="610.1" cy="343.4" r="2.02"/><circle cx="620.7" cy="343.4" r="2.02"/><circle cx="631.4" cy="343.4" r="2.02"/><circle cx="642" cy="343.4" r="2.02"/><circle cx="652.6" cy="343.4" r="2.02"/><circle cx="663.2" cy="343.4" r="2.02"/><circle cx="673.8" cy="343.4" r="2.02"/><circle cx="684.5" cy="343.4" r="2.02"/><circle cx="695.1" cy="343.4" r="2.02"/><circle cx="705.7" cy="343.4" r="2.02"/><circle cx="283.9" cy="447.3" r="2.02"/><circle cx="294.6" cy="447.3" r="2.02"/><circle cx="305.2" cy="447.3" r="2.02"/><circle cx="315.9" cy="447.3" r="2.02"/><circle cx="326.5" cy="447.3" r="2.02"/><circle cx="337.2" cy="447.3" r="2.02"/><circle cx="347.9" cy="447.3" r="2.02"/><circle cx="358.5" cy="447.3" r="2.02"/><circle cx="369.2" cy="447.3" r="2.02"/><circle cx="379.8" cy="447.3" r="2.02"/><circle cx="390.5" cy="447.3" r="2.02"/><circle cx="401.2" cy="447.3" r="2.02"/><circle cx="411.8" cy="447.3" r="2.02"/><circle cx="422.5" cy="447.3" r="2.02"/><circle cx="433.1" cy="447.3" r="2.02"/><circle cx="443.8" cy="447.3" r="2.02"/><circle cx="454.5" cy="447.3" r="2.02"/><circle cx="465.1" cy="447.3" r="2.02"/><circle cx="475.8" cy="447.3" r="2.02"/><circle cx="486.4" cy="447.3" r="2.02"/><circle cx="497.1" cy="447.3" r="2.02"/><circle cx="507.8" cy="447.3" r="2.02"/><circle cx="518.4" cy="447.3" r="2.02"/><circle cx="529.1" cy="447.3" r="2.02"/><circle cx="539.7" cy="447.3" r="2.02"/><circle cx="550.4" cy="447.3" r="2.02"/><circle cx="561.1" cy="447.3" r="2.02"/><circle cx="571.7" cy="447.3" r="2.02"/><circle cx="582.4" cy="447.3" r="2.02"/><circle cx="593" cy="447.3" r="2.02"/><circle cx="603.7" cy="447.3" r="2.02"/><circle cx="614.4" cy="447.3" r="2.02"/><circle cx="625" cy="447.3" r="2.02"/><circle cx="635.7" cy="447.3" r="2.02"/><circle cx="646.3" cy="447.3" r="2.02"/><circle cx="657" cy="447.3" r="2.02"/><circle cx="667.7" cy="447.3" r="2.02"/><circle cx="678.3" cy="447.3" r="2.02"/><circle cx="689" cy="447.3" r="2.02"/><circle cx="699.6" cy="447.3" r="2.02"/><circle cx="710.3" cy="447.3" r="2.02"/><circle cx="378.6" cy="542.1" r="2.02"/><circle cx="389.4" cy="542.1" r="2.02"/><circle cx="400.1" cy="542.1" r="2.02"/><circle cx="410.9" cy="542.1" r="2.02"/><circle cx="421.7" cy="542.1" r="2.02"/><circle cx="432.5" cy="542.1" r="2.02"/><circle cx="443.2" cy="542.1" r="2.02"/><circle cx="454" cy="542.1" r="2.02"/><circle cx="464.8" cy="542.1" r="2.02"/><circle cx="475.5" cy="542.1" r="2.02"/><circle cx="486.3" cy="542.1" r="2.02"/><circle cx="497.1" cy="542.1" r="2.02"/><circle cx="507.8" cy="542.1" r="2.02"/><circle cx="518.6" cy="542.1" r="2.02"/><circle cx="529.4" cy="542.1" r="2.02"/><circle cx="540.1" cy="542.1" r="2.02"/><circle cx="550.9" cy="542.1" r="2.02"/><circle cx="561.7" cy="542.1" r="2.02"/><circle cx="572.5" cy="542.1" r="2.02"/><circle cx="583.2" cy="542.1" r="2.02"/><circle cx="594" cy="542.1" r="2.02"/><circle cx="604.8" cy="542.1" r="2.02"/><circle cx="615.5" cy="542.1" r="2.02"/><circle cx="291.2" cy="454.6" r="2.02"/><circle cx="703" cy="454.6" r="2.02"/><circle cx="298.5" cy="461.9" r="2.02"/><circle cx="695.7" cy="461.9" r="2.02"/><circle cx="305.8" cy="469.2" r="2.02"/><circle cx="688.4" cy="469.2" r="2.02"/><circle cx="313" cy="476.4" r="2.02"/><circle cx="681.2" cy="476.4" r="2.02"/><circle cx="320.3" cy="483.7" r="2.02"/><circle cx="673.9" cy="483.7" r="2.02"/><circle cx="327.6" cy="491" r="2.02"/><circle cx="666.6" cy="491" r="2.02"/><circle cx="334.9" cy="498.3" r="2.02"/><circle cx="659.3" cy="498.3" r="2.02"/><circle cx="342.2" cy="505.6" r="2.02"/><circle cx="652" cy="505.6" r="2.02"/><circle cx="349.5" cy="512.9" r="2.02"/><circle cx="644.7" cy="512.9" r="2.02"/><circle cx="356.7" cy="520.1" r="2.02"/><circle cx="637.5" cy="520.1" r="2.02"/><circle cx="364" cy="527.4" r="2.02"/><circle cx="630.2" cy="527.4" r="2.02"/><circle cx="371.3" cy="534.7" r="2.02"/><circle cx="622.9" cy="534.7" r="2.02"/><circle cx="293.5" cy="453.5" r="2.02"/><circle cx="307.2" cy="453.5" r="2.02"/><circle cx="321" cy="453.5" r="2.02"/><circle cx="334.7" cy="453.5" r="2.02"/><circle cx="348.4" cy="453.5" r="2.02"/><circle cx="362.1" cy="453.5" r="2.02"/><circle cx="375.9" cy="453.5" r="2.02"/><circle cx="389.6" cy="453.5" r="2.02"/><circle cx="403.3" cy="453.5" r="2.02"/><circle cx="417.1" cy="453.5" r="2.02"/><circle cx="430.8" cy="453.5" r="2.02"/><circle cx="444.5" cy="453.5" r="2.02"/><circle cx="458.3" cy="453.5" r="2.02"/><circle cx="472" cy="453.5" r="2.02"/><circle cx="485.7" cy="453.5" r="2.02"/><circle cx="499.5" cy="453.5" r="2.02"/><circle cx="513.2" cy="453.5" r="2.02"/><circle cx="526.9" cy="453.5" r="2.02"/><circle cx="540.6" cy="453.5" r="2.02"/><circle cx="554.4" cy="453.5" r="2.02"/><circle cx="568.1" cy="453.5" r="2.02"/><circle cx="581.8" cy="453.5" r="2.02"/><circle cx="595.6" cy="453.5" r="2.02"/><circle cx="609.3" cy="453.5" r="2.02"/><circle cx="623" cy="453.5" r="2.02"/><circle cx="636.8" cy="453.5" r="2.02"/><circle cx="650.5" cy="453.5" r="2.02"/><circle cx="664.2" cy="453.5" r="2.02"/><circle cx="677.9" cy="453.5" r="2.02"/><circle cx="691.7" cy="453.5" r="2.02"/><circle cx="307.2" cy="467.2" r="2.02"/><circle cx="321" cy="467.2" r="2.02"/><circle cx="334.7" cy="467.2" r="2.02"/><circle cx="348.4" cy="467.2" r="2.02"/><circle cx="362.1" cy="467.2" r="2.02"/><circle cx="375.9" cy="467.2" r="2.02"/><circle cx="389.6" cy="467.2" r="2.02"/><circle cx="403.3" cy="467.2" r="2.02"/><circle cx="417.1" cy="467.2" r="2.02"/><circle cx="430.8" cy="467.2" r="2.02"/><circle cx="444.5" cy="467.2" r="2.02"/><circle cx="458.3" cy="467.2" r="2.02"/><circle cx="472" cy="467.2" r="2.02"/><circle cx="485.7" cy="467.2" r="2.02"/><circle cx="499.5" cy="467.2" r="2.02"/><circle cx="513.2" cy="467.2" r="2.02"/><circle cx="526.9" cy="467.2" r="2.02"/><circle cx="540.6" cy="467.2" r="2.02"/><circle cx="554.4" cy="467.2" r="2.02"/><circle cx="568.1" cy="467.2" r="2.02"/><circle cx="581.8" cy="467.2" r="2.02"/><circle cx="595.6" cy="467.2" r="2.02"/><circle cx="609.3" cy="467.2" r="2.02"/><circle cx="623" cy="467.2" r="2.02"/><circle cx="636.8" cy="467.2" r="2.02"/><circle cx="650.5" cy="467.2" r="2.02"/><circle cx="664.2" cy="467.2" r="2.02"/><circle cx="677.9" cy="467.2" r="2.02"/><circle cx="321" cy="481" r="2.02"/><circle cx="334.7" cy="481" r="2.02"/><circle cx="348.4" cy="481" r="2.02"/><circle cx="362.1" cy="481" r="2.02"/><circle cx="375.9" cy="481" r="2.02"/><circle cx="389.6" cy="481" r="2.02"/><circle cx="403.3" cy="481" r="2.02"/><circle cx="417.1" cy="481" r="2.02"/><circle cx="430.8" cy="481" r="2.02"/><circle cx="444.5" cy="481" r="2.02"/><circle cx="458.3" cy="481" r="2.02"/><circle cx="472" cy="481" r="2.02"/><circle cx="485.7" cy="481" r="2.02"/><circle cx="499.5" cy="481" r="2.02"/><circle cx="513.2" cy="481" r="2.02"/><circle cx="526.9" cy="481" r="2.02"/><circle cx="540.6" cy="481" r="2.02"/><circle cx="554.4" cy="481" r="2.02"/><circle cx="568.1" cy="481" r="2.02"/><circle cx="581.8" cy="481" r="2.02"/><circle cx="595.6" cy="481" r="2.02"/><circle cx="609.3" cy="481" r="2.02"/><circle cx="623" cy="481" r="2.02"/><circle cx="636.8" cy="481" r="2.02"/><circle cx="650.5" cy="481" r="2.02"/><circle cx="664.2" cy="481" r="2.02"/><circle cx="334.7" cy="494.8" r="2.02"/><circle cx="348.4" cy="494.8" r="2.02"/><circle cx="362.1" cy="494.8" r="2.02"/><circle cx="375.9" cy="494.8" r="2.02"/><circle cx="389.6" cy="494.8" r="2.02"/><circle cx="403.3" cy="494.8" r="2.02"/><circle cx="417.1" cy="494.8" r="2.02"/><circle cx="430.8" cy="494.8" r="2.02"/><circle cx="444.5" cy="494.8" r="2.02"/><circle cx="458.3" cy="494.8" r="2.02"/><circle cx="472" cy="494.8" r="2.02"/><circle cx="485.7" cy="494.8" r="2.02"/><circle cx="499.5" cy="494.8" r="2.02"/><circle cx="513.2" cy="494.8" r="2.02"/><circle cx="526.9" cy="494.8" r="2.02"/><circle cx="540.6" cy="494.8" r="2.02"/><circle cx="554.4" cy="494.8" r="2.02"/><circle cx="568.1" cy="494.8" r="2.02"/><circle cx="581.8" cy="494.8" r="2.02"/><circle cx="595.6" cy="494.8" r="2.02"/><circle cx="609.3" cy="494.8" r="2.02"/><circle cx="623" cy="494.8" r="2.02"/><circle cx="636.8" cy="494.8" r="2.02"/><circle cx="650.5" cy="494.8" r="2.02"/><circle cx="348.4" cy="508.5" r="2.02"/><circle cx="362.1" cy="508.5" r="2.02"/><circle cx="375.9" cy="508.5" r="2.02"/><circle cx="389.6" cy="508.5" r="2.02"/><circle cx="403.3" cy="508.5" r="2.02"/><circle cx="417.1" cy="508.5" r="2.02"/><circle cx="430.8" cy="508.5" r="2.02"/><circle cx="444.5" cy="508.5" r="2.02"/><circle cx="458.3" cy="508.5" r="2.02"/><circle cx="472" cy="508.5" r="2.02"/><circle cx="485.7" cy="508.5" r="2.02"/><circle cx="499.5" cy="508.5" r="2.02"/><circle cx="513.2" cy="508.5" r="2.02"/><circle cx="526.9" cy="508.5" r="2.02"/><circle cx="540.6" cy="508.5" r="2.02"/><circle cx="554.4" cy="508.5" r="2.02"/><circle cx="568.1" cy="508.5" r="2.02"/><circle cx="581.8" cy="508.5" r="2.02"/><circle cx="595.6" cy="508.5" r="2.02"/><circle cx="609.3" cy="508.5" r="2.02"/><circle cx="623" cy="508.5" r="2.02"/><circle cx="636.8" cy="508.5" r="2.02"/><circle cx="362.1" cy="522.2" r="2.02"/><circle cx="375.9" cy="522.2" r="2.02"/><circle cx="389.6" cy="522.2" r="2.02"/><circle cx="403.3" cy="522.2" r="2.02"/><circle cx="417.1" cy="522.2" r="2.02"/><circle cx="430.8" cy="522.2" r="2.02"/><circle cx="444.5" cy="522.2" r="2.02"/><circle cx="458.3" cy="522.2" r="2.02"/><circle cx="472" cy="522.2" r="2.02"/><circle cx="485.7" cy="522.2" r="2.02"/><circle cx="499.5" cy="522.2" r="2.02"/><circle cx="513.2" cy="522.2" r="2.02"/><circle cx="526.9" cy="522.2" r="2.02"/><circle cx="540.6" cy="522.2" r="2.02"/><circle cx="554.4" cy="522.2" r="2.02"/><circle cx="568.1" cy="522.2" r="2.02"/><circle cx="581.8" cy="522.2" r="2.02"/><circle cx="595.6" cy="522.2" r="2.02"/><circle cx="609.3" cy="522.2" r="2.02"/><circle cx="623" cy="522.2" r="2.02"/><circle cx="375.9" cy="536" r="2.02"/><circle cx="389.6" cy="536" r="2.02"/><circle cx="403.3" cy="536" r="2.02"/><circle cx="417.1" cy="536" r="2.02"/><circle cx="430.8" cy="536" r="2.02"/><circle cx="444.5" cy="536" r="2.02"/><circle cx="458.3" cy="536" r="2.02"/><circle cx="472" cy="536" r="2.02"/><circle cx="485.7" cy="536" r="2.02"/><circle cx="499.5" cy="536" r="2.02"/><circle cx="513.2" cy="536" r="2.02"/><circle cx="526.9" cy="536" r="2.02"/><circle cx="540.6" cy="536" r="2.02"/><circle cx="554.4" cy="536" r="2.02"/><circle cx="568.1" cy="536" r="2.02"/><circle cx="581.8" cy="536" r="2.02"/><circle cx="595.6" cy="536" r="2.02"/><circle cx="609.3" cy="536" r="2.02"/></g>
</g>
<path d="M819.4 216.6V240.6L824.9 235.3L830 247.2L833.3 245.7L828.5 234.2L836.8 233.7Z" fill="#000" stroke="#fff" stroke-width="1.1" stroke-linejoin="miter"/>
</g></svg>
<div id="msg" class="abs"><div class="ln" id="ln1" style="left:66px;top:45.5px;word-spacing:4.6px"><span id="w1" style="letter-spacing:-1.75px">検出された</span> <span id="w2" style="letter-spacing:.6px">異常接近点</span> <span id="w3" style="margin-left:-2px">が</span></div><div class="ln" id="ln2" style="left:41.5px;top:69px;letter-spacing:-1.3px">赤い円で囲まれて表示されました。</div></div>
<div class="abs" style="left:906px;top:49.5px;width:18px;height:706.5px;background:#f0f0f0"></div>
<div class="abs" style="left:906px;top:49.5px;width:18px;height:1.5px;background:#6f6f6f"></div>
<div class="abs" style="left:908.3px;top:68.6px;width:14.2px;height:435.6px;border-radius:2.5px;background:linear-gradient(90deg,#f6f6f6 0,#ececec 30%,#d4d4d4 70%,#bebebe 100%);box-shadow:0 0 0 .5px #d0d0d0"></div>
<div class="abs" style="left:912px;top:282px;width:7px;height:1px;background:#7a7a7a;box-shadow:0 2.5px 0 #7a7a7a,0 5px 0 #7a7a7a,0 7.5px 0 #7a7a7a"></div>
<svg class="abs" style="left:906px;top:49.5px" width="18" height="707" viewBox="0 0 18 707"><path d="M6.2 12.3l3.2-4 3.2 4z" fill="#444"/><path d="M6 695.5h7l-3.5 4.3z" fill="#222"/></svg>
<div class="abs" style="left:109.5px;top:756px;width:815px;height:18px;background:#f0f0f0"></div>
<div class="abs" style="left:127.5px;top:758.5px;width:758.5px;height:14.5px;border-radius:3px;background:linear-gradient(#fbfbfb 0,#eeeeee 35%,#d8d8d8 75%,#c6c6c6 100%);box-shadow:0 0 0 .5px #cfcfcf"></div>
<div class="abs" style="left:503.5px;top:762.5px;width:1px;height:6px;background:#7a7a7a;box-shadow:2.5px 0 0 #7a7a7a,5px 0 0 #7a7a7a"></div>
<svg class="abs" style="left:109.5px;top:756px" width="815" height="18" viewBox="0 0 815 18"><path d="M11 5.5v7l-4-3.5z" fill="#333"/><path d="M786.5 5.5v7l4.3-3.5z" fill="#555"/></svg>
<div class="btn" style="left:5.5px;top:26px;width:23.2px;height:21.5px"></div>
<div class="btn sel" style="left:5.5px;top:50px;width:23.2px;height:21px"></div>
<div class="btn" style="left:5.5px;top:73.4px;width:23.2px;height:21.2px"></div>
<div class="btn" style="left:5.5px;top:96.4px;width:23.2px;height:21.6px"></div>
<div class="btn" style="left:5.5px;top:120.7px;width:23.2px;height:18.5px"></div>
<div class="abs" style="left:8px;top:52.3px;width:18.2px;height:17.7px;background:#ffff00"></div>
<div class="abs" style="left:6px;top:140px;width:21.6px;height:94px;background:#030390"></div>
<div class="btn num" style="left:5.3px;top:237.8px;width:22.9px;height:17.8px">4</div>
<div class="btn num" style="left:5.3px;top:257.1px;width:22.9px;height:17.8px">5</div>
<div class="btn num" style="left:5.3px;top:276.5px;width:22.9px;height:17.8px">6</div>
<div class="btn num sel" style="left:5.3px;top:295.8px;width:22.9px;height:17.8px"><div class="abs" style="left:2px;top:2px;width:18px;height:13.5px;background:#ffff00;"></div><span style="position:relative">7</span></div>
<div class="btn num" style="left:5.3px;top:315.2px;width:22.9px;height:17.8px">8</div>
<div class="btn num" style="left:5.3px;top:334.5px;width:22.9px;height:17.8px">9</div>
<div class="btn num" style="left:5.3px;top:353.8px;width:22.9px;height:17.8px">10</div>
<div class="btn num" style="left:5.3px;top:373.2px;width:22.9px;height:17.8px">11</div>
<div class="btn num" style="left:5.3px;top:392.5px;width:22.9px;height:17.8px">12</div>
<div class="btn num" style="left:5.3px;top:411.9px;width:22.9px;height:17.8px">13</div>
<div class="btn num" style="left:5.3px;top:431.2px;width:22.9px;height:17.8px">14</div>
<div class="btn num" style="left:5.3px;top:450.5px;width:22.9px;height:17.8px">15</div>
<div class="btn num" style="left:5.3px;top:469.9px;width:22.9px;height:17.8px">16</div>
<div class="btn num" style="left:5.3px;top:489.2px;width:22.9px;height:17.8px">17</div>
<div class="btn num" style="left:5.3px;top:508.6px;width:22.9px;height:17.8px">18</div>
<div class="btn num" style="left:5.3px;top:527.9px;width:22.9px;height:17.8px">19</div>
<div class="btn num" style="left:5.3px;top:547.2px;width:22.9px;height:17.8px">20</div>
<div class="btn num" style="left:5.3px;top:566.6px;width:22.9px;height:17.8px">21</div>
<div class="btn" style="left:29.6px;top:25.7px;width:34.2px;height:24.7px"></div>
<div class="btn" style="left:65.7px;top:25.7px;width:34.2px;height:24.7px"></div>
<div class="btn" style="left:29.6px;top:51.2px;width:34.2px;height:24.7px"></div>
<div class="btn" style="left:65.7px;top:51.2px;width:34.2px;height:24.7px"></div>
<div class="btn" style="left:29.6px;top:76.7px;width:34.2px;height:24.7px"></div>
<div class="btn" style="left:65.7px;top:76.7px;width:34.2px;height:24.7px"></div>
<div class="btn" style="left:29.6px;top:102.1px;width:34.2px;height:24.7px"></div>
<div class="btn" style="left:65.7px;top:102.1px;width:34.2px;height:24.7px"></div>
<div class="btn" style="left:29.6px;top:127.6px;width:34.2px;height:24.7px"></div>
<div class="btn" style="left:65.7px;top:127.6px;width:34.2px;height:24.7px"></div>
<div class="btn" style="left:29.6px;top:153.1px;width:34.2px;height:24.7px"></div>
<div class="btn" style="left:65.7px;top:153.1px;width:34.2px;height:24.7px"></div>
<div class="btn" style="left:29.6px;top:178.6px;width:34.2px;height:24.7px"></div>
<div class="btn" style="left:65.7px;top:178.6px;width:34.2px;height:24.7px"></div>
<div class="btn" style="left:29.6px;top:204.1px;width:34.2px;height:24.7px"></div>
<div class="btn" style="left:65.7px;top:204.1px;width:34.2px;height:24.7px"></div>
<div class="btn" style="left:29.6px;top:229.5px;width:34.2px;height:24.7px"></div>
<div class="btn" style="left:65.7px;top:229.5px;width:34.2px;height:24.7px"></div>
<div class="btn" style="left:29.6px;top:255px;width:34.2px;height:24.7px"></div>
<div class="btn" style="left:65.7px;top:255px;width:34.2px;height:24.7px"></div>
<div class="btn" style="left:29.6px;top:280.5px;width:70.3px;height:24.7px"></div>
<div class="btn" style="left:29.6px;top:306px;width:34.2px;height:24.7px"></div>
<div class="btn" style="left:65.7px;top:306px;width:34.2px;height:24.7px"></div>
<div class="btn sel" style="left:29.6px;top:331.5px;width:34.2px;height:24.7px"></div>
<div class="btn" style="left:65.7px;top:331.5px;width:34.2px;height:24.7px"></div>
<div class="btn" style="left:29.6px;top:356.9px;width:34.2px;height:24.7px"></div>
<div class="btn" style="left:65.7px;top:356.9px;width:34.2px;height:24.7px"></div>
<div class="btn" style="left:29.6px;top:382.4px;width:34.2px;height:24.7px"></div>
<div class="btn" style="left:65.7px;top:382.4px;width:34.2px;height:24.7px"></div>
<div class="btn" style="left:29.6px;top:407.9px;width:34.2px;height:24.7px"></div>
<div class="btn" style="left:65.7px;top:407.9px;width:34.2px;height:24.7px"></div>
<div class="btn" style="left:29.6px;top:433.4px;width:34.2px;height:24.7px"></div>
<div class="btn" style="left:65.7px;top:433.4px;width:34.2px;height:24.7px"></div>
<div class="btn" style="left:29.6px;top:458.9px;width:34.2px;height:24.7px"></div>
<div class="btn" style="left:65.7px;top:458.9px;width:34.2px;height:24.7px"></div>
<div class="btn" style="left:29.6px;top:484.3px;width:34.2px;height:24.7px"></div>
<div class="btn" style="left:65.7px;top:484.3px;width:34.2px;height:24.7px"></div>
<div class="btn sel" style="left:29.6px;top:509.8px;width:34.2px;height:24.7px"></div>
<div class="btn" style="left:65.7px;top:509.8px;width:34.2px;height:24.7px"></div>
<div class="btn" style="left:29.6px;top:535.3px;width:34.2px;height:24.7px"></div>
<div class="btn sel" style="left:65.7px;top:535.3px;width:34.2px;height:24.7px"></div>
<div class="btn" style="left:29.6px;top:560.8px;width:34.2px;height:24.7px"></div>
<div class="btn" style="left:65.7px;top:560.8px;width:34.2px;height:24.7px"></div>
<div class="abs" style="left:32.4px;top:333.5px;width:30.3px;height:20.4px;background:#ffff00"></div>
<div class="abs" style="left:32.4px;top:511.9px;width:30.3px;height:20.2px;background:#ffff00"></div>
<svg class="abs" style="left:0;top:0" width="104" height="600" viewBox="0 0 104 600" fill="none" stroke-linecap="round" stroke-linejoin="round">
<circle cx="16.2" cy="36.4" r="3.3" fill="#e6f000" stroke="#1c1c1c" stroke-width="1.4"/>
<circle cx="17.3" cy="61.1" r="5.2" fill="#fff" stroke="#2a2a2a" stroke-width="1.5"/>
<circle cx="16.8" cy="84" r="7.3" fill="#00f0ff" stroke="#202020" stroke-width="1.1"/>
<path d="M11 102.4l10.8 10.8M21.8 102.4L11 113.2" stroke="#d8142c" stroke-width="2.1"/>
<path d="M11.4 127.5h10.6l-5.3 5.3z" fill="#000080" stroke="none"/>
<circle cx="16.4" cy="146.0" r="2" fill="#fff"/>
<circle cx="16.4" cy="156.2" r="2" fill="#fff"/>
<circle cx="16.4" cy="166.4" r="2" fill="#fff"/>
<circle cx="16.4" cy="176.6" r="2" fill="#fff"/>
<circle cx="16.4" cy="186.8" r="2" fill="#fff"/>
<circle cx="16.4" cy="197.0" r="2" fill="#fff"/>
<circle cx="16.4" cy="207.2" r="2" fill="#fff"/>
<circle cx="16.4" cy="217.4" r="2" fill="#fff"/>
<circle cx="16.4" cy="227.6" r="2" fill="#fff"/>
<path d="M36 44.6C34.4 39 37.5 35 42 35.8S49.5 39.6 54 37.6S58.6 34 58.6 30.6" stroke="#2626a2" stroke-width="1.85"/>
<path d="M70.6 43.2L94.4 32" stroke="#2626a2" stroke-width="1.85"/>
<path d="M35 63.6h23.8M50 55.8v14" stroke="#2626a2" stroke-width="1.85"/>
<path d="M71.2 68.6L74 61.2L89 66.6L94.2 56" stroke="#2626a2" stroke-width="1.85"/>
<path d="M36 94.6C38 87 42 83 48 83S56 84.4 58.2 85" stroke="#2626a2" stroke-width="1.85"/>
<path d="M71 94.6C71.6 90 74.5 86.6 78 87S81.5 92 83 89.6S86 83.4 90.4 83.2S94.6 84.8 95.2 85.6" stroke="#2626a2" stroke-width="1.85"/>
<rect x="36.4" y="108.6" width="21" height="10.4" stroke="#3434cc" stroke-width="1.85"/>
<g fill="#2626a2"><circle cx="72.0" cy="107.4" r="1.05"/><circle cx="76.2" cy="107.4" r="1.05"/><circle cx="80.5" cy="107.4" r="1.05"/><circle cx="84.8" cy="107.4" r="1.05"/><circle cx="89.0" cy="107.4" r="1.05"/><circle cx="93.2" cy="107.4" r="1.05"/><circle cx="72.0" cy="111.4" r="1.05"/><circle cx="76.2" cy="111.4" r="1.05"/><circle cx="80.5" cy="111.4" r="1.05"/><circle cx="84.8" cy="111.4" r="1.05"/><circle cx="89.0" cy="111.4" r="1.05"/><circle cx="93.2" cy="111.4" r="1.05"/><circle cx="72.0" cy="115.4" r="1.05"/><circle cx="76.2" cy="115.4" r="1.05"/><circle cx="80.5" cy="115.4" r="1.05"/><circle cx="84.8" cy="115.4" r="1.05"/><circle cx="89.0" cy="115.4" r="1.05"/><circle cx="93.2" cy="115.4" r="1.05"/><circle cx="72.0" cy="119.4" r="1.05"/><circle cx="76.2" cy="119.4" r="1.05"/><circle cx="80.5" cy="119.4" r="1.05"/><circle cx="84.8" cy="119.4" r="1.05"/><circle cx="89.0" cy="119.4" r="1.05"/><circle cx="93.2" cy="119.4" r="1.05"/></g>
<circle cx="47.3" cy="139.2" r="7.4" stroke="#2626a2" stroke-width="1.85"/>
<ellipse cx="82.5" cy="139.2" rx="11.8" ry="6.7" stroke="#2626a2" stroke-width="1.85"/>
<path d="M44 156.6A7.9 7.9 0 1 0 55.4 163.8" stroke="#2626a2" stroke-width="1.85"/>
<path d="M44 157.4L47.3 163.4H55" stroke="#222" stroke-width="1" stroke-dasharray="0.9 1.1" stroke-linecap="butt"/>
<path d="M71.2 158.2h22.4v12.2H71.2zM71.2 164.3h22.4M78.7 158.2v12.2M86.1 158.2v12.2" stroke="#3434cc" stroke-width="2"/>
<path d="M34.2 194.7h25.4M37.3 181.6v18.4" stroke="#202020" stroke-width="1.2"/>
<path d="M40.4 181.6C42 192 45 198.4 48.2 198.4S54.6 192 56.2 181.6" stroke="#2626a2" stroke-width="1.85"/>
<path d="M69.9 190.5h24.6M81.9 181v18.5" stroke="#202020" stroke-width="1.2"/>
<path d="M85 181C85.4 185.2 88 187 94.5 187.1M70.5 193.3C76 193.6 78.4 195.4 78.8 199.5" stroke="#2626a2" stroke-width="1.85"/>
<path d="M34.2 219.7h25.4M38.4 207.7v16.3" stroke="#202020" stroke-width="1.2"/>
<path d="M39 219.7C40 214 44 210.6 59.6 209.7" stroke="#2626a2" stroke-width="1.85"/>
<path d="M69.9 217.3h25.3M72.3 207.7v17.3" stroke="#202020" stroke-width="1.2"/>
<path d="M70.5 218.6C72 212 74.5 208.4 76.7 208.4C80 208.4 81.5 213 83.6 217.3S87 223.4 89 223.4S93.4 220 95.2 214.5" stroke="#2626a2" stroke-width="1.85"/>
<path d="M34.2 241.2h25.4M37.3 231.6v18" stroke="#202020" stroke-width="1.2"/>
<path d="M34.2 233.8C36 232.2 38 232 39.6 233.4C42.6 236 44 249.5 48.2 249.5S55 238 59.6 233" stroke="#2626a2" stroke-width="1.85"/>
<path d="M71.9 241.2h20.6M82.2 231.6v18.4" stroke="#202020" stroke-width="1.2"/>
<path d="M74.7 250C76 245 78.6 242.6 80.8 241.6S86.4 238 89 232.3" stroke="#2626a2" stroke-width="1.85"/>
<path d="M34.3 264.6L40.6 258.3M34.3 271.9L48.4 257.8M38.7 274.8L55.2 258.3M46 274.8L60 260.8M52.8 274.8L60 267.6" stroke="#2626a2" stroke-width="1.85"/>
<g fill="#2626a2"><rect x="68.9" y="260.4" width="2.6" height="2.6"/><rect x="74.4" y="261.0" width="1.4" height="1.4"/><rect x="78.7" y="260.4" width="2.6" height="2.6"/><rect x="83.8" y="261.0" width="1.4" height="1.4"/><rect x="88.2" y="260.4" width="2.6" height="2.6"/><rect x="92.7" y="260.4" width="2.6" height="2.6"/><rect x="69.5" y="266.0" width="1.4" height="1.4"/><rect x="74.4" y="266.0" width="1.4" height="1.4"/><rect x="78.7" y="265.4" width="2.6" height="2.6"/><rect x="83.8" y="266.0" width="1.4" height="1.4"/><rect x="88.8" y="266.0" width="1.4" height="1.4"/><rect x="93.3" y="266.0" width="1.4" height="1.4"/><rect x="69.5" y="271.2" width="1.4" height="1.4"/><rect x="74.4" y="271.2" width="1.4" height="1.4"/><rect x="79.3" y="271.2" width="1.4" height="1.4"/><rect x="83.8" y="271.2" width="1.4" height="1.4"/><rect x="88.8" y="271.2" width="1.4" height="1.4"/><rect x="93.3" y="271.2" width="1.4" height="1.4"/></g>
<path d="M48.9 287.9L67.3 284.5M52.8 300.1H72.7" stroke="#5c5c5c" stroke-width="1.6"/>
<ellipse cx="45.5" cy="294.7" rx="9" ry="5.6" stroke="#f01ae0" stroke-width="2" stroke-dasharray="1.7 1.5" stroke-linecap="butt"/>
<ellipse cx="78.3" cy="291.7" rx="13.3" ry="7.2" stroke="#1616e2" stroke-width="2"/>
<path d="M39.6 311.2h-1.4l-2.9 3v1.2M35.3 321v1.2l2.9 3h4M51.6 325.2h5l3.2-3v-.6M59.8 314.6v-.4l-3.2-3h-5.6" stroke="#14147c" stroke-width="2.2" stroke-linejoin="miter" stroke-linecap="butt"/>
<path d="M46.4 308l3.1 3.2-3.1 3.2-3.1-3.2z" fill="#f4ec00" stroke="#444" stroke-width="0.7"/>
<path d="M34 314.8l6.4 6.4M40.4 314.8l-6.4 6.4" stroke="#ec5a40" stroke-width="1.1"/>
<circle cx="46.9" cy="322.6" r="4.7" fill="#00e8ff" stroke="#223" stroke-width="0.9"/>
<circle cx="56.8" cy="318.3" r="3.6" fill="#fff" stroke="#14147c" stroke-width="1.1"/>
<text x="82.6" y="321.2" font-family="Liberation Sans,'Noto Sans CJK JP',sans-serif" font-weight="bold" font-size="9.6" text-anchor="middle" fill="#1c1c8c" stroke="none" textLength="24.6" lengthAdjust="spacingAndGlyphs">アイウ</text>
<rect x="39.8" y="343.4" width="12.8" height="6" stroke="#3c3c3c" stroke-width="1.5"/>
<rect x="-6" y="-3" width="12" height="6" transform="translate(54 341) rotate(-35)" fill="#fff" stroke="#111" stroke-width="1.1"/>
<rect x="68.8" y="334.8" width="27" height="16" stroke="#3434cc" stroke-width="2"/>
<rect x="-6" y="-3" width="12" height="6" transform="translate(88.4 340.6) rotate(-35)" fill="#fff" stroke="#111" stroke-width="1.1"/>
<path d="M34.3 367.6L49.4 360.3M45.0 375.6L59.6 368.1" stroke="#2a2a2a" stroke-width="1.1"/><path d="M34.8 368.6L39.2 368.6L44.2 372.2L44.2 375.2L34.8 375.2z" stroke="#f01ae0" stroke-width="1.9"/><path d="M50.2 361.2L55.2 361.2L59.3 363.9L59.3 366.8L50.2 366.8z" stroke="#3434cc" stroke-width="1.7"/><path d="M34.3 393.8h10.2" stroke="#555" stroke-width="1.4"/><path d="M46.0 395.7v7.3" stroke="#222" stroke-width="1.2"/><path d="M34.8 385.5L44.2 385.5L44.2 387.5L37.7 391.0L34.8 391.0z" stroke="#3434cc" stroke-width="1.7"/><path d="M34.8 396.7L38.7 396.7L44.2 399.8L44.2 402.6L34.8 402.6z" stroke="#f01ae0" stroke-width="1.9"/><path d="M48.8 402.6L48.8 400.1L54.2 396.7L58.3 396.7L58.3 402.6z" stroke="#3434cc" stroke-width="1.7"/><path d="M38.7 419H54.2M48.9 411.8L44.0 424.9" stroke="#222" stroke-width="1.1"/><path d="M34.8 421.0L39.2 421.0L44.2 424.0L44.2 426.9L34.8 426.9z" stroke="#f01ae0" stroke-width="1.9"/><path d="M49.3 411.7L59.3 411.7L59.3 417.7L54.2 417.7L49.3 414.7z" stroke="#3434cc" stroke-width="1.7"/><rect x="36.6" y="441" width="18.8" height="6.6" stroke="#f01ae0" stroke-width="1.9"/><path d="M37.6 447.0L49.8 436.2L54.3 440.7L41.8 452.4z" stroke="#3434cc" stroke-width="1.7"/><circle cx="45.8" cy="444.4" r="1.1" fill="#111"/><rect x="33.2" y="462.9" width="9.6" height="5.6" stroke="#f01ae0" stroke-width="1.9"/><path d="M40.1 465.2C45.6 465.6 49.0 467.4 52.0 471" stroke="#222" stroke-width="1.1"/><path d="M48.2 471.3L52.8 467.2L59.2 473.2L54.2 477.7z" stroke="#3434cc" stroke-width="1.7"/><circle cx="53.0" cy="471.9" r="1.1" fill="#111"/><circle cx="41.1" cy="478.1" r="1.1" fill="#111"/>
<path d="M69.8 367.6L84.9 360.3M80.5 375.6L95.1 368.1" stroke="#2a2a2a" stroke-width="1.1"/><path d="M69.6 368.6h1.5M72.0 368.6h1.5M74.5 368.6h1.5M69.6 371.0h1.5M72.0 371.0h1.5M74.5 371.0h1.5M76.9 371.0h1.5M69.6 373.3h1.5M72.0 373.3h1.5M74.5 373.3h1.5M76.9 373.3h1.5M79.4 373.3h1.5M69.6 375.7h1.5M72.0 375.7h1.5M74.5 375.7h1.5M76.9 375.7h1.5M79.4 375.7h1.5" stroke="#f01ae0" stroke-width="1.5" stroke-linecap="butt"/><path d="M85.7 361.2L90.7 361.2L94.8 363.9L94.8 366.8L85.7 366.8z" stroke="#3434cc" stroke-width="1.7"/><path d="M69.8 393.8h10.2" stroke="#555" stroke-width="1.4"/><path d="M81.5 395.7v7.3" stroke="#222" stroke-width="1.2"/><path d="M70.3 385.5L79.7 385.5L79.7 387.5L73.2 391.0L70.3 391.0z" stroke="#3434cc" stroke-width="1.7"/><path d="M69.6 396.4h1.5M72.0 396.4h1.5M74.5 396.4h1.5M69.6 398.8h1.5M72.0 398.8h1.5M74.5 398.8h1.5M76.9 398.8h1.5M69.6 401.1h1.5M72.0 401.1h1.5M74.5 401.1h1.5M76.9 401.1h1.5M79.4 401.1h1.5M69.6 403.4h1.5M72.0 403.4h1.5M74.5 403.4h1.5M76.9 403.4h1.5M79.4 403.4h1.5" stroke="#f01ae0" stroke-width="1.5" stroke-linecap="butt"/><path d="M84.3 402.6L84.3 400.1L89.7 396.7L93.8 396.7L93.8 402.6z" stroke="#3434cc" stroke-width="1.7"/><path d="M74.2 419H89.7M84.4 411.8L79.5 424.9" stroke="#222" stroke-width="1.1"/><path d="M69.6 420.8h1.5M72.0 420.8h1.5M74.5 420.8h1.5M69.6 423.2h1.5M72.0 423.2h1.5M74.5 423.2h1.5M76.9 423.2h1.5M69.6 425.5h1.5M72.0 425.5h1.5M74.5 425.5h1.5M76.9 425.5h1.5M79.4 425.5h1.5M69.6 427.9h1.5M72.0 427.9h1.5M74.5 427.9h1.5M76.9 427.9h1.5M79.4 427.9h1.5" stroke="#f01ae0" stroke-width="1.5" stroke-linecap="butt"/><path d="M84.8 411.7L94.8 411.7L94.8 417.7L89.7 417.7L84.8 414.7z" stroke="#3434cc" stroke-width="1.7"/><path d="M71.5 442.0h1.5M74.0 442.0h1.5M76.5 442.0h1.5M79.0 442.0h1.5M81.5 442.0h1.5M84.0 442.0h1.5M86.5 442.0h1.5M89.0 442.0h1.5M71.5 444.7h1.5M74.0 444.7h1.5M76.5 444.7h1.5M79.0 444.7h1.5M81.5 444.7h1.5M84.0 444.7h1.5M86.5 444.7h1.5M89.0 444.7h1.5M71.5 447.4h1.5M74.0 447.4h1.5M76.5 447.4h1.5M79.0 447.4h1.5M81.5 447.4h1.5M84.0 447.4h1.5M86.5 447.4h1.5M89.0 447.4h1.5" stroke="#f01ae0" stroke-width="1.5" stroke-linecap="butt"/><path d="M73.1 447.0L85.3 436.2L89.8 440.7L77.3 452.4z" stroke="#3434cc" stroke-width="1.7"/><circle cx="81.3" cy="444.4" r="1.1" fill="#111"/><path d="M68.1 463.0h1.5M70.7 463.0h1.5M73.3 463.0h1.5M75.9 463.0h1.5M68.1 465.6h1.5M70.7 465.6h1.5M73.3 465.6h1.5M75.9 465.6h1.5M68.1 468.2h1.5M70.7 468.2h1.5M73.3 468.2h1.5M75.9 468.2h1.5" stroke="#f01ae0" stroke-width="1.5" stroke-linecap="butt"/><path d="M75.6 465.2C81.1 465.6 84.5 467.4 87.5 471" stroke="#222" stroke-width="1.1"/><path d="M83.7 471.3L88.3 467.2L94.7 473.2L89.7 477.7z" stroke="#3434cc" stroke-width="1.7"/><circle cx="88.5" cy="471.9" r="1.1" fill="#111"/><circle cx="76.6" cy="478.1" r="1.1" fill="#111"/>
<path d="M35.9 489.4l6.5 4M56.5 489.4l-6.5 4M35.9 502.6l6.5-3.6M56.5 502.6l-6.5-3.6" stroke="#333" stroke-width="0.9"/>
<rect x="35.9" y="489.4" width="20.6" height="13.2" stroke="#e01020" stroke-width="2.2" stroke-linejoin="miter"/>
<path d="M41.0 493.6h1.6M43.9 493.6h1.6M46.8 493.6h1.6M49.7 493.6h1.6M41.0 496.5h1.6M43.9 496.5h1.6M46.8 496.5h1.6M49.7 496.5h1.6M41.0 499.4h1.6M43.9 499.4h1.6M46.8 499.4h1.6M49.7 499.4h1.6" stroke="#f01ae0" stroke-width="1.6" stroke-linecap="butt"/>
<path d="M71.3 489.4l6.5 4M92.9 489.4l-6.5 4M71.3 502.6l6.5-3.6M92.9 502.6l-6.5-3.6" stroke="#333" stroke-width="0.9"/>
<rect x="71.3" y="489.4" width="21.6" height="13.2" stroke="#3434cc" stroke-width="2.2" stroke-linejoin="miter"/>
<path d="M76.9 493.6h1.6M79.8 493.6h1.6M82.7 493.6h1.6M85.6 493.6h1.6M76.9 496.5h1.6M79.8 496.5h1.6M82.7 496.5h1.6M85.6 496.5h1.6M76.9 499.4h1.6M79.8 499.4h1.6M82.7 499.4h1.6M85.6 499.4h1.6" stroke="#f01ae0" stroke-width="1.6" stroke-linecap="butt"/>
<rect x="40.2" y="517.8" width="16.6" height="9" fill="#f4f000" stroke="#3c3c78" stroke-width="2.4" stroke-linejoin="miter"/>
<path d="M42.6 520.6h12M43.9 522.3h12M42.6 524h12" stroke="#4a4a30" stroke-width="1.1" stroke-dasharray="1.1 1.5" stroke-linecap="butt"/>
<defs><pattern id="hx" width="3" height="3" patternUnits="userSpaceOnUse"><rect width="3" height="3" fill="#e8ecff"/><rect width="1.5" height="1.5" fill="#8c9cf0"/><rect x="1.5" y="1.5" width="1.5" height="1.5" fill="#8c9cf0"/></pattern></defs>
<path d="M82.5 513l7.2 4.1v8.2l-7.2 4.1l-7.2-4.1v-8.2z" fill="url(#hx)" stroke="#4242d4" stroke-width="1.9"/>
<rect x="34.4" y="538.6" width="25.6" height="16.9" fill="#fff" stroke="#4e4ec0" stroke-width="2.2" stroke-linejoin="miter"/><rect x="36.6" y="540.8" width="21.2" height="12.5" fill="url(#hx)" stroke="none"/>
<path d="M37 541.2l7 4.2M57.4 541.2l-7 4.2M37 552.9l7-4.2M57.4 552.9l-7-4.2" stroke="#1e1e84" stroke-width="1.5"/><path d="M36.8 541v3.4l3.6-3.4zM57.6 541v3.4l-3.6-3.4zM36.8 553.1v-3.4l3.6 3.4zM57.6 553.1v-3.4l-3.6 3.4z" fill="#1e1e84" stroke="none"/>
<path d="M68.2 538.4H98.6V556.6H68.2z" fill="#c4c4c4" stroke="none"/>
<path d="M68.2 538.4H96L73 556.6H68.2z" fill="#ffff00" stroke="none"/>
<path d="M95 539.6L74.6 556.8" stroke="#222" stroke-width="1.2"/>
<circle cx="76" cy="545.2" r="4.3" fill="#fff" stroke="#222" stroke-width="1"/>
<circle cx="93.6" cy="546.4" r="1.9" fill="#c8c83c" stroke="#444" stroke-width="0.8"/>
<path d="M86.6 550.4l2.8 2.9-2.8 2.9-2.8-2.9z" fill="#00d8f4" stroke="#335" stroke-width="0.7"/>
<path d="M92.4 550.6l4 4M96.4 550.6l-4 4" stroke="#e8503c" stroke-width="1"/>
<circle cx="41.8" cy="569.2" r="5" fill="#00e8ff" stroke="#222" stroke-width="0.9"/>
<circle cx="41.8" cy="578" r="2.6" fill="#e4e820" stroke="#333" stroke-width="0.8"/>
<circle cx="53.4" cy="569" r="3.2" fill="#fff" stroke="#222" stroke-width="0.9"/>
<path d="M50 574.2l6.6 6.4M56.6 574.2l-6.6 6.4" stroke="#e8402c" stroke-width="1"/>
<path d="M98.6 563.4V582H79.4z" fill="#c4c4c4" stroke="none"/>
<path d="M96.9 565.3L80.4 581.3" stroke="#444" stroke-width="1.3"/>
<circle cx="75" cy="569.6" r="5" fill="#00e8ff" stroke="#222" stroke-width="0.9"/>
<circle cx="85.6" cy="567.6" r="2.6" fill="#e4e820" stroke="#333" stroke-width="0.8"/>
<path d="M72 575.6l5.4 5.4M77.4 575.6l-5.4 5.4" stroke="#e8402c" stroke-width="1"/>
<path d="M91.6 573.2l3.2 3.2-3.2 3.2-3.2-3.2z" fill="#fff" stroke="#3a3aa8" stroke-width="1"/>
</svg>
<div class="abs" style="left:0;top:779.5px;width:935px;height:4px;background:#f0f0f0"></div>
<div id="status" class="abs"><span class="abs" style="left:12px;top:1.7px;letter-spacing:.1px">領域を指定して消去</span><span class="abs" style="left:156px;top:1.7px;letter-spacing:0.45px;word-spacing:0px">( 443 , 96 )</span><span class="abs" style="left:495px;top:1.7px;letter-spacing:.15px">長方形領域のひとつの頂点を指定してください</span><div class="abs" style="left:129.5px;top:1px;width:1px;height:12px;background:#a8a8a8"></div><div class="abs" style="left:136.5px;top:1px;width:1px;height:12px;background:#a8a8a8"></div><div class="abs" style="left:491.5px;top:1px;width:1.5px;height:12px;background:#666"></div></div>
<svg class="abs" style="left:921px;top:786px" width="11" height="11" viewBox="0 0 11 11"><path d="M10 1L1 10M10 4.5L4.5 10M10 8L8 10" stroke="#9a9a9a" stroke-width="1.2"/><path d="M10.8 1.8L1.8 10.8M10.8 5.3L5.3 10.8" stroke="#fff" stroke-width="0.8"/></svg>
<div id="bottom" class="abs"></div>
</body></html>
